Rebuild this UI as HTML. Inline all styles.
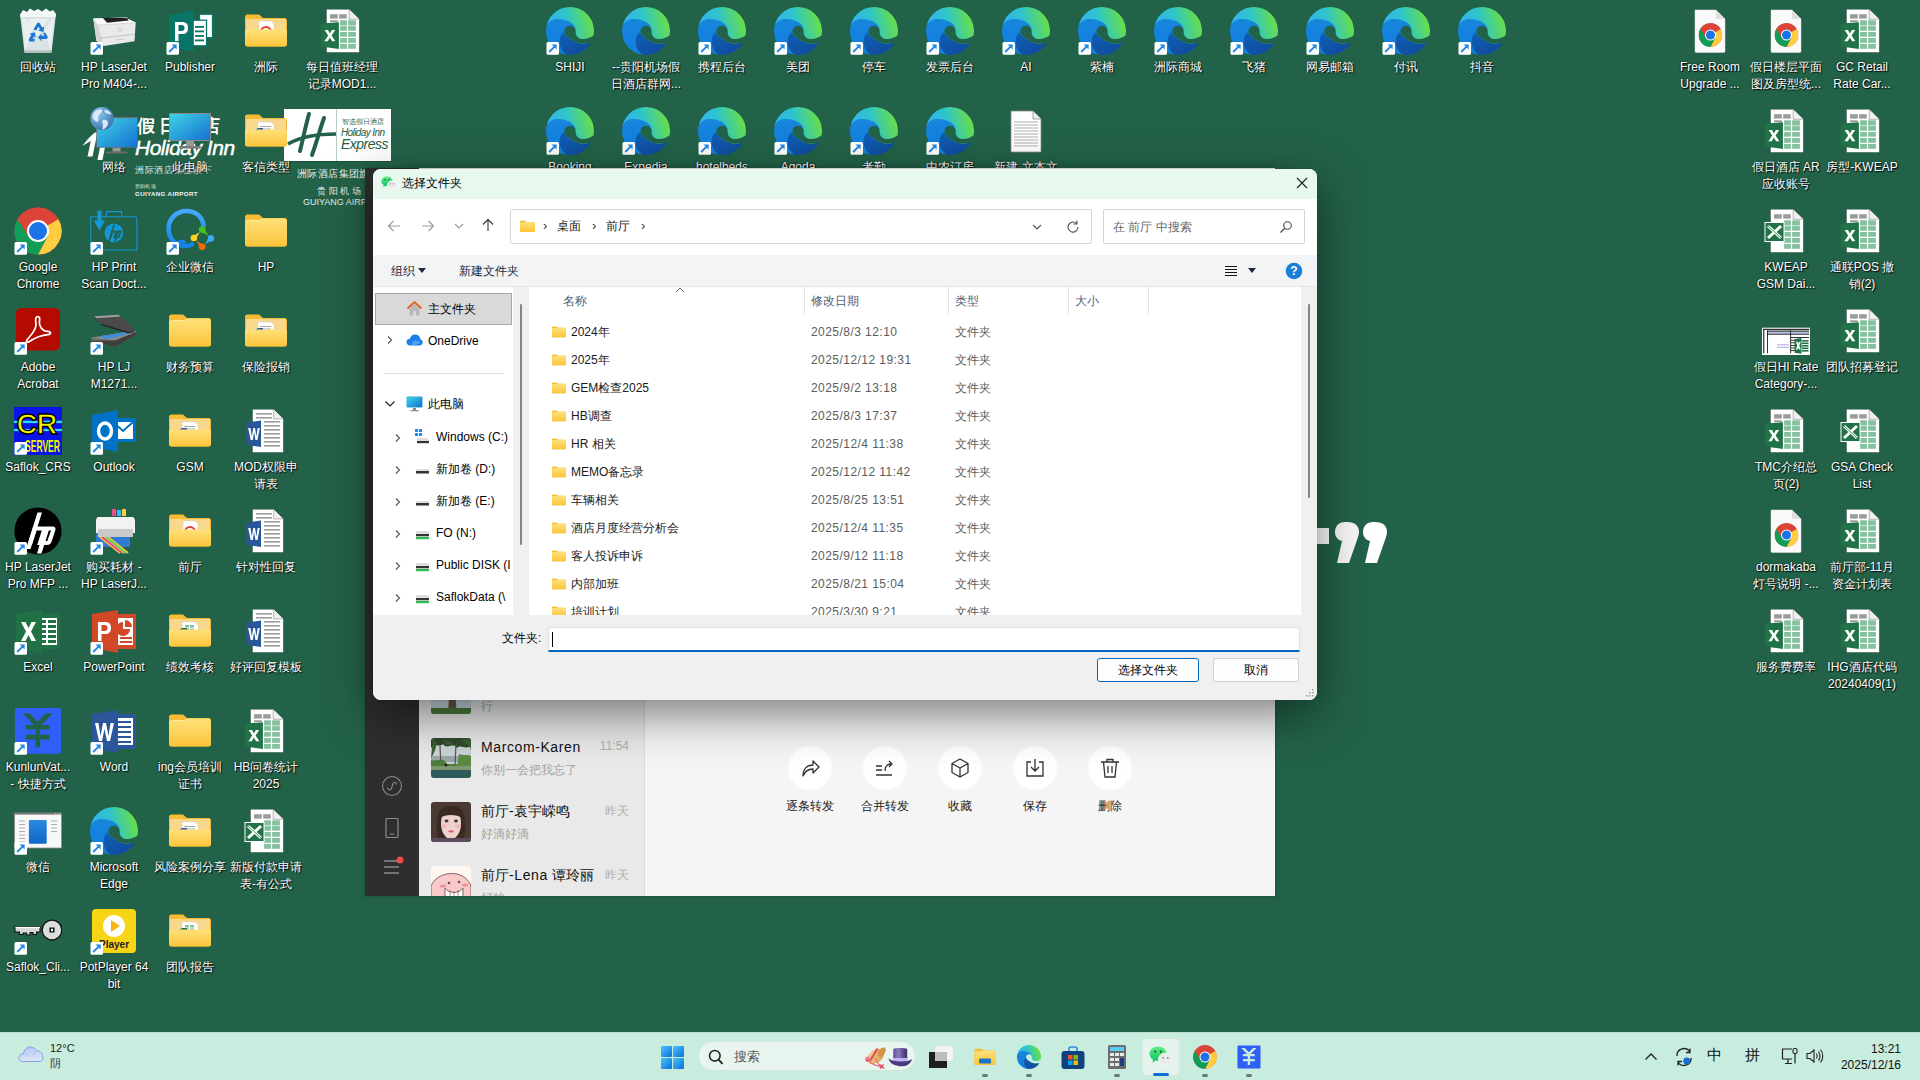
<!DOCTYPE html>
<html><head><meta charset="utf-8">
<style>
*{margin:0;padding:0;box-sizing:border-box}
html,body{width:1920px;height:1080px;overflow:hidden}
body{background:#226248;font-family:"Liberation Sans",sans-serif;position:relative;font-size:12px;color:#000}
.ic{position:absolute;width:76px;height:100px}
.si{position:absolute;left:14px;top:7px;width:48px;height:48px;overflow:visible}
.lb{position:absolute;left:1px;top:59px;width:74px;text-align:center;color:#fff;font-size:12px;line-height:17px;text-shadow:1px 1px 1px rgba(0,0,0,.9),0 0 2px rgba(0,0,0,.7)}
.abs{position:absolute}
/* logos */
.hlogo{position:absolute;color:#fff;font-style:italic;font-weight:bold}
/* wechat */
#wx{position:absolute;left:365px;top:168px;width:910px;height:728px;background:#f5f5f5;overflow:hidden;box-shadow:0 0 4px rgba(0,0,0,.25)}
#wxside{position:absolute;left:0;top:0;width:54px;height:728px;background:#2e2e2e}
#wxlist{position:absolute;left:54px;top:0;width:226px;height:728px;background:#e9e9e9;border-right:1px solid #d9d9d9}
.chat{position:absolute;left:0;width:226px;height:64px}
.av{position:absolute;left:12px;top:10px;width:40px;height:40px;overflow:hidden}
.cn{position:absolute;left:62px;top:11px;font-size:14px;color:#111;white-space:nowrap;letter-spacing:.6px}
.ct{position:absolute;right:16px;top:11px;font-size:12px;color:#b0b0b0}
.cm{position:absolute;left:62px;top:34px;font-size:12px;color:#a3a3a3;white-space:nowrap}
.act{position:absolute;top:578px;width:44px;height:44px;border-radius:50%;background:#fff}
.actl{position:absolute;top:630px;width:80px;text-align:center;font-size:12px;color:#222}
#wxshade{position:absolute;left:54px;top:531px;width:856px;height:80px;background:linear-gradient(rgba(0,0,0,.3),rgba(0,0,0,.13) 45%,rgba(0,0,0,.03) 85%,rgba(0,0,0,0))}
/* dialog */
#dlg{position:absolute;left:373px;top:169px;width:944px;height:531px;background:#fff;border-radius:8px;overflow:hidden;box-shadow:0 14px 48px rgba(0,0,0,.5),0 0 1px rgba(0,0,0,.4)}
#ttl{position:absolute;left:0;top:0;width:944px;height:30px;background:#e7f8ef}
#nav{position:absolute;left:0;top:30px;width:944px;height:56px;background:#fff}
#cmd{position:absolute;left:0;top:86px;width:944px;height:32px;background:#f3f4f6;border-bottom:1px solid #e5e5e5}
.box{position:absolute;background:#fff;border:1px solid #d6d6d6;border-radius:2px}
.t{position:absolute;white-space:nowrap;line-height:16px}
#navpane{position:absolute;left:0;top:118px;width:140px;height:328px;background:#fff;overflow:hidden}
#navtrack{position:absolute;left:140px;top:118px;width:16px;height:328px;background:#f0f0f0}
#list{position:absolute;left:156px;top:118px;width:772px;height:328px;background:#fff;overflow:hidden}
#rtrack{position:absolute;left:928px;top:118px;width:16px;height:328px;background:#f0f0f0}
#foot{position:absolute;left:0;top:446px;width:944px;height:85px;background:#f0f0f0}
.row{position:absolute;left:0;width:772px;height:28px}
.fi{position:absolute;left:22px;top:6px;width:16px;height:16px}
.rn{position:absolute;left:42px;top:6px;color:#1a1a1a;font-size:12px;line-height:16px;white-space:nowrap}
.rd{position:absolute;left:282px;top:6px;color:#5c5c5c;font-size:12px;line-height:16px;white-space:nowrap;letter-spacing:.45px}
.rt{position:absolute;left:426px;top:6px;color:#5c5c5c;font-size:12px;line-height:16px;white-space:nowrap}
.sep{position:absolute;top:0;width:1px;height:27px;background:#e5e5e5}
.btn{position:absolute;top:489px;height:24px;background:#fdfdfd;border:1px solid #d0d0d0;border-radius:3px;text-align:center;line-height:22px;font-size:12px;color:#000}
/* taskbar */
#tb{position:absolute;left:0;top:1032px;width:1920px;height:48px;background:#c8ecdd;border-top:1px solid #bcdccd}
.tbi{position:absolute;top:12px;width:24px;height:24px}
.dot{position:absolute;top:41px;width:6px;height:3px;border-radius:2px;background:#6e7a74}
i{font-style:normal;display:inline-block;width:1em;text-align:center;margin-right:var(--ls,0px)}
</style></head><body>

<svg width="0" height="0" style="position:absolute">
<defs>
<linearGradient id="gEdge" x1="0.05" y1="0.6" x2="0.95" y2="0.35">
 <stop offset="0" stop-color="#33b2f2"/><stop offset="0.5" stop-color="#2ec4cc"/><stop offset="1" stop-color="#66de4c"/>
</linearGradient>
<linearGradient id="gEdgeTail" x1="0" y1="0" x2="1" y2="1">
 <stop offset="0" stop-color="#1060bb"/><stop offset="1" stop-color="#0f4592"/>
</linearGradient>
<linearGradient id="gEdgeMid" x1="0" y1="0" x2="0" y2="1">
 <stop offset="0" stop-color="#1886dc"/><stop offset="1" stop-color="#0f7ee0"/>
</linearGradient>
<linearGradient id="gFold" x1="0" y1="0" x2="0" y2="1">
 <stop offset="0" stop-color="#ffe07a"/><stop offset="1" stop-color="#fbc53b"/>
</linearGradient>
<linearGradient id="gFoldBack" x1="0" y1="0" x2="0" y2="1">
 <stop offset="0" stop-color="#f8bd33"/><stop offset="1" stop-color="#eaa91f"/>
</linearGradient>
<linearGradient id="gMon" x1="0" y1="0" x2="1" y2="1">
 <stop offset="0" stop-color="#3fd3e6"/><stop offset="1" stop-color="#1570d0"/>
</linearGradient>
<linearGradient id="gWin" x1="0" y1="0" x2="1" y2="1">
 <stop offset="0" stop-color="#4cc2ff"/><stop offset="1" stop-color="#0a6fd8"/>
</linearGradient>

<symbol id="sc" viewBox="0 0 48 48">
 <rect x="0.5" y="35" width="12.5" height="12.7" rx="1.5" fill="#fff"/>
 <path d="M3.2 45 L9.8 38.4" stroke="#1e88e5" stroke-width="1.8" fill="none"/>
 <path d="M5.6 37.6 H10.6 V42.6 Z" fill="#1e88e5"/>
</symbol>

<symbol id="edge" viewBox="0 0 48 48">
 <mask id="mEdge"><circle cx="24" cy="24" r="24" fill="#fff"/>
  <path d="M18.4 24.5 A5.6 5.6 0 0 1 29.6 24 C29.6 27 30.2 29.5 33 31.2 C38 33.2 44 31.5 49 27.5 L49 40 L44.3 35.8 C38 37.3 31 37 26 33 C22 30 18.4 28 18.4 24.5 Z" fill="#000"/>
 </mask>
 <g mask="url(#mEdge)">
  <rect width="48" height="48" fill="url(#gEdge)"/>
  <path d="M-1 20 C3 14 7 12 11.5 12 C17.5 12 23 13.5 26.8 17 C28.5 18.8 29.5 21 29.6 24 L18.4 24.5 C15 27 13.2 30 13.2 34 C13.2 40 16 45 22 49 L-1 49 Z" fill="url(#gEdgeMid)"/>
  <path d="M18.4 24.5 C15 27 13.2 30 13.2 34 C13.2 40 16 45 22 49 L49 49 L49 31 L44.3 35.8 C38 37.3 31 37 26 33 C22 30 18.4 28 18.4 24.5 Z" fill="url(#gEdgeTail)"/>
 </g>
</symbol>

<symbol id="xls" viewBox="0 0 48 48">
 <path d="M8.3 2 H31.5 L41.6 12.2 V45.6 H8.3 Z" fill="#2a3a33" opacity="0.55"/>
 <path d="M8.7 2.4 H31.2 L41.2 12.3 V45.2 H8.7 Z" fill="#fff"/>
 <path d="M31.2 2.4 V12.3 H41.2" fill="#f0f0f0" stroke="#8a8a8a" stroke-width="0.6"/>
 <rect x="12" y="7.2" width="7.8" height="4.4" fill="#9b9b9b"/><rect x="21.2" y="7.2" width="7.5" height="4.4" fill="#9b9b9b"/>
 <rect x="12" y="13.3" width="7.8" height="1.8" fill="#9b9b9b"/>
 <g fill="#84c19e">
 <rect x="22.1" y="13.3" width="6.8" height="5.2"/><rect x="30.1" y="13.3" width="7.8" height="5.2"/>
 <rect x="22.1" y="19.1" width="6.8" height="4.6"/><rect x="30.1" y="19.1" width="7.8" height="4.6"/>
 <rect x="22.1" y="25" width="6.8" height="4.7"/><rect x="30.1" y="25" width="7.8" height="4.7"/>
 <rect x="22.1" y="31" width="6.8" height="4.8"/><rect x="30.1" y="31" width="7.8" height="4.8"/>
 <rect x="22.1" y="36.9" width="6.8" height="4.9"/><rect x="30.1" y="36.9" width="7.8" height="4.9"/>
 </g>
 <path d="M2.9 16.6 L20.9 15.2 V41.9 L2.9 39.6 Z" fill="#1f7346"/>
 <path d="M6.6 23 H10 L11.9 26.6 L13.8 23 H17.2 L13.6 28.6 L17.4 34.2 H14 L11.9 30.5 L9.8 34.2 H6.4 L10.2 28.6 Z" fill="#fff"/>
</symbol>

<symbol id="xls2" viewBox="0 0 48 48">
 <path d="M8.3 2 H31.5 L41.6 12.2 V45.6 H8.3 Z" fill="#2a3a33" opacity="0.55"/>
 <path d="M8.7 2.4 H31.2 L41.2 12.3 V45.2 H8.7 Z" fill="#fff"/>
 <path d="M31.2 2.4 V12.3 H41.2" fill="#f0f0f0" stroke="#8a8a8a" stroke-width="0.6"/>
 <rect x="12" y="7.2" width="7.8" height="4.4" fill="#9b9b9b"/><rect x="21.2" y="7.2" width="7.5" height="4.4" fill="#9b9b9b"/>
 <g fill="#84c19e">
 <rect x="22.1" y="13.3" width="6.8" height="5.2"/><rect x="30.1" y="13.3" width="7.8" height="5.2"/>
 <rect x="22.1" y="19.1" width="6.8" height="4.6"/><rect x="30.1" y="19.1" width="7.8" height="4.6"/>
 <rect x="22.1" y="25" width="6.8" height="4.7"/><rect x="30.1" y="25" width="7.8" height="4.7"/>
 <rect x="22.1" y="31" width="6.8" height="4.8"/><rect x="30.1" y="31" width="7.8" height="4.8"/>
 <rect x="22.1" y="36.9" width="6.8" height="4.9"/><rect x="30.1" y="36.9" width="7.8" height="4.9"/>
 </g>
 <rect x="2.5" y="15" width="20" height="20" fill="#fff"/>
 <rect x="3.5" y="16" width="18" height="18" fill="#1f7346"/>
 <path d="M6 19 L19 31 M19 19 L6 31" stroke="#fff" stroke-width="3"/>
 <path d="M6 19 L19 31" stroke="#1f7346" stroke-width="0.8"/>
</symbol>

<symbol id="doc" viewBox="0 0 48 48">
 <path d="M10.3 2 H32 L41.6 11.8 V45.6 H10.3 Z" fill="#2a3a33" opacity="0.5"/>
 <path d="M10.7 2.4 H31.7 L41.2 11.9 V45.2 H10.7 Z" fill="#fff"/>
 <path d="M31.7 2.4 V11.9 H41.2" fill="#f0f0f0" stroke="#8a8a8a" stroke-width="0.6"/>
 <g fill="#9d9d9d"><rect x="14" y="6" width="16" height="1.6"/><rect x="14" y="10" width="16" height="1.6"/>
 <rect x="22" y="14" width="16" height="1.6"/><rect x="22" y="18" width="16" height="1.6"/><rect x="22" y="22" width="16" height="1.6"/>
 <rect x="22" y="26" width="16" height="1.6"/><rect x="22" y="30" width="16" height="1.6"/><rect x="22" y="34" width="16" height="1.6"/><rect x="22" y="38" width="16" height="1.6"/></g>
 <path d="M4.5 15.5 L19 13.5 V40 L4.5 38 Z" fill="#2b579a"/>
 <path d="M6.2 21 H8.5 L9.8 29.5 L11.3 21 H13 L14.4 29.5 L15.7 21 H17.8 L15.4 33 H13.4 L12.1 25 L10.8 33 H8.7 Z" fill="#fff"/>
</symbol>

<symbol id="folder" viewBox="0 0 48 48">
 <path d="M3 10 C3 8.5 4 7.5 5.5 7.5 H17 L21 11 H42.5 C44 11 45 12 45 13.5 V37 C45 38.5 44 39.5 42.5 39.5 H5.5 C4 39.5 3 38.5 3 37 Z" fill="url(#gFoldBack)"/>
 <path d="M3 15.5 C3 14 4 13 5.5 13 H18 L21.5 11.5 H42.5 C44 11.5 45 12.5 45 14 V37 C45 38.5 44 39.5 42.5 39.5 H5.5 C4 39.5 3 38.5 3 37 Z" fill="url(#gFold)"/>
 <path d="M5 13.4 H18 L21.5 11.9" stroke="#fff6c8" stroke-width="0.6" fill="none"/>
</symbol>

<symbol id="folderdoc" viewBox="0 0 48 48">
 <path d="M3 10 C3 8.5 4 7.5 5.5 7.5 H17 L21 11 H42.5 C44 11 45 12 45 13.5 V37 C45 38.5 44 39.5 42.5 39.5 H5.5 C4 39.5 3 38.5 3 37 Z" fill="url(#gFoldBack)"/>
 <path d="M4 12 H44 V24 H4 Z" fill="#f7d88c"/>
 <path d="M16 15 H29 L32 18 V28 H16 Z" fill="#fff" stroke="#cfcfcf" stroke-width="0.5"/>
 <g fill="#a9a9a9"><rect x="18" y="19" width="11" height="1"/><rect x="18" y="21.5" width="11" height="1"/><rect x="18" y="24" width="11" height="1"/></g>
 <path d="M12 24 L16 21 H21 V24 Z" fill="#2c5aa0"/>
 <path d="M3 24 C3 23 3.8 22.5 5 22.5 H43 C44.2 22.5 45 23 45 24 V37 C45 38.5 44 39.5 42.5 39.5 H5.5 C4 39.5 3 38.5 3 37 Z" fill="url(#gFold)"/>
</symbol>

<symbol id="folderxls" viewBox="0 0 48 48">
 <path d="M3 10 C3 8.5 4 7.5 5.5 7.5 H17 L21 11 H42.5 C44 11 45 12 45 13.5 V37 C45 38.5 44 39.5 42.5 39.5 H5.5 C4 39.5 3 38.5 3 37 Z" fill="url(#gFoldBack)"/>
 <path d="M4 12 H44 V24 H4 Z" fill="#f7d88c"/>
 <path d="M16 15 H29 L32 18 V28 H16 Z" fill="#fff" stroke="#cfcfcf" stroke-width="0.5"/>
 <g fill="#84c19e"><rect x="19" y="18" width="4" height="2.5"/><rect x="24" y="18" width="4" height="2.5"/><rect x="19" y="21.5" width="4" height="2.5"/><rect x="24" y="21.5" width="4" height="2.5"/></g>
 <path d="M12 24 L16 21 H21 V24 Z" fill="#1f7346"/>
 <path d="M3 24 C3 23 3.8 22.5 5 22.5 H43 C44.2 22.5 45 23 45 24 V37 C45 38.5 44 39.5 42.5 39.5 H5.5 C4 39.5 3 38.5 3 37 Z" fill="url(#gFold)"/>
</symbol>

<symbol id="folderpdf" viewBox="0 0 48 48">
 <path d="M3 10 C3 8.5 4 7.5 5.5 7.5 H17 L21 11 H42.5 C44 11 45 12 45 13.5 V37 C45 38.5 44 39.5 42.5 39.5 H5.5 C4 39.5 3 38.5 3 37 Z" fill="url(#gFoldBack)"/>
 <path d="M4 12 H44 V24 H4 Z" fill="#f7d88c"/>
 <path d="M17 14 H29 L32 17 V28 H17 Z" fill="#fff" stroke="#cfcfcf" stroke-width="0.5"/>
 <path d="M19 25 A5 5 0 0 1 29 25" stroke="#e03c31" stroke-width="2.2" fill="none"/>
 <path d="M3 24 C3 23 3.8 22.5 5 22.5 H43 C44.2 22.5 45 23 45 24 V37 C45 38.5 44 39.5 42.5 39.5 H5.5 C4 39.5 3 38.5 3 37 Z" fill="url(#gFold)"/>
</symbol>

<symbol id="chromelogo" viewBox="0 0 48 48">
 <circle cx="24" cy="24" r="23.6" fill="#db4437"/>
 <path d="M24 24 L3.56 35.8 A23.6 23.6 0 0 1 3.56 12.2 L14.5 29.5 Z" fill="#0f9d58"/>
 <path d="M24 24 L44.44 12.2 A23.6 23.6 0 0 1 24 47.6 L33.5 29.5 Z" fill="#ffcd40"/>
 <path d="M3.56 35.8 A23.6 23.6 0 0 0 24 47.6 L33.5 29.5 L24 24 Z" fill="#0f9d58"/>
 <path d="M3.56 12.2 A23.6 23.6 0 0 1 44.44 12.2 H24 A11 11 0 0 0 14.5 18.5 Z" fill="#db4437"/>
 <circle cx="24" cy="24" r="11" fill="#fff"/>
 <circle cx="24" cy="24" r="9" fill="#1a73e8"/>
</symbol>

<symbol id="chromefile" viewBox="0 0 48 48">
 <path d="M9 3 H30 L39 12 V44 C39 45 38.5 45.5 37.5 45.5 H10.5 C9.5 45.5 9 45 9 44 Z" fill="#fafafa" stroke="#e3e3e3" stroke-width="0.5"/>
 <path d="M30 3 V11 C30 11.6 30.4 12 31 12 H39" fill="#dedede"/>
 <use href="#chromelogo" x="12.5" y="16" width="24" height="24"/>
</symbol>

<symbol id="txt" viewBox="0 0 48 48">
 <path d="M9 4 H31 L39 12 V45 H9 Z" fill="#fff" stroke="#8a8a8a" stroke-width="0.8"/>
 <path d="M31 4 V12 H39" fill="#eee" stroke="#8a8a8a" stroke-width="0.8"/>
 <g stroke="#9a9a9a" stroke-width="0.8"><path d="M12 15 H36 M12 18 H36 M12 21 H36 M12 24 H36 M12 27 H36 M12 30 H36 M12 33 H36 M12 36 H36 M12 39 H36"/></g>
</symbol>

<symbol id="recycle" viewBox="0 0 48 48">
 <path d="M6 7 H42 L37.5 45.5 H10.5 Z" fill="#d9e2e4"/>
 <path d="M8 9 L20 20 L11 44 Z M40 9 L30 24 L37 44 Z M14 12 L34 12 L24 30 Z" fill="#eef3f3" opacity=".8"/>
 <path d="M6 7 H42 L41.6 10 H6.4 Z" fill="#f4f7f7"/>
 <path d="M6.5 7 L9 3 L13 5 L16 1.5 L20 4 L24 2 L28 4.5 L32 1.5 L36 4.5 L39 3 L42 7 Z" fill="#f7f9f9"/>
 <path d="M10.2 43.5 H37.8 L37.5 46 H10.5 Z" fill="#b3bcbe"/>
 <g fill="#1976d2">
  <path d="M19.5 22.5 L23 16.5 C23.8 15.2 25 15.2 25.8 16.5 L28.2 20.6 L30.2 19.4 L29.4 25 L24.2 23.5 L26 22.3 L24.4 19.6 L22.3 23.5 Z"/>
  <path d="M31.5 26 L33.5 29.5 C34.2 30.8 33.5 32 32 32 H27.5 V34.3 L24 30.5 L27.5 26.6 V28.8 H30.5 L28.8 25.6 Z"/>
  <path d="M20.5 34.5 H16.5 C15 34.5 14.3 33.3 15 32 L17.4 27.8 L15.4 26.7 L20.7 25.2 L21.6 30.6 L19.8 29.5 L18.3 31.6 H20.5 Z"/>
 </g>
</symbol>

<symbol id="printer" viewBox="0 0 48 48">
 <path d="M3.3 11.4 L35 10.4 L45.7 15.4 L44.5 34.2 L13.9 39 L6.4 33.7 Z" fill="#e9e9e9"/>
 <path d="M3.3 11.4 L35 10.4 L45.7 15.4 L7.6 17.8 Z" fill="#f8f8f8"/>
 <path d="M3.3 11.4 L7.6 17.8 L13.9 39 L6.4 33.7 Z" fill="#d4d4d4"/>
 <path d="M13 11 L37 10.8 L38.5 13.6 L17 15.8 Z" fill="#1e1e1e"/>
 <path d="M34 10.2 L37.5 10.2 L38 11 L34.5 11.2 Z" fill="#9ab4e8"/>
 <path d="M10 30.5 L45 26.8 L45 27.8 L10.3 31.6 Z" fill="#c4c4c4"/>
 <path d="M7.6 17.8 L45.7 15.4 L45.6 16.4 L8 18.8 Z" fill="#dadada"/>
 <circle cx="30" cy="22.5" r="1.7" fill="none" stroke="#c4c4c4" stroke-width=".8"/>
 <path d="M26 33 L34 32" stroke="#c4c4c4" stroke-width=".8"/>
</symbol>

<symbol id="publisher" viewBox="0 0 48 48">
 <rect x="33.5" y="7.2" width="13" height="23.5" fill="#fff" stroke="#077568" stroke-width="1.3"/>
 <rect x="26.5" y="13.2" width="14" height="25.6" fill="#fff" stroke="#077568" stroke-width="1.3"/>
 <g fill="#077568"><rect x="29" y="19" width="9" height="1.8"/><rect x="29" y="23.5" width="9" height="1.8"/><rect x="29" y="28" width="9" height="1.8"/><rect x="29" y="32.5" width="9" height="1.8"/></g>
 <path d="M2.8 8.5 L27.8 3 V44.5 L2.8 40 Z" fill="#077568"/>
 <path d="M9 15 H16 C20 15 22 17 22 21 C22 25 20 27 16 27 H12.5 V34 H9 Z M12.5 18 V24 H15.5 C17.5 24 18.5 23 18.5 21 C18.5 19 17.5 18 15.5 18 Z" fill="#fff"/>
</symbol>

<symbol id="monitor" viewBox="0 0 48 48">
 <rect x="3" y="6" width="42" height="28" rx="1" fill="#8b8b8b"/>
 <rect x="4" y="7" width="40" height="26" fill="url(#gMon)"/>
 <rect x="20" y="34" width="8" height="5" fill="#9a9a9a"/>
 <rect x="13" y="39" width="22" height="2.5" rx="1" fill="#7a7a7a"/>
</symbol>

<symbol id="network" viewBox="0 0 48 48">
 <rect x="6.3" y="10" width="41.3" height="30.7" rx=".8" fill="#6e6e6e"/>
 <rect x="6.9" y="11.2" width="40.1" height="28.9" fill="url(#gMon)"/>
 <rect x="22.5" y="40.7" width="8" height="4" fill="#9a9a9a"/>
 <rect x="15.5" y="44.5" width="22" height="2" rx="1" fill="#6a6a6a"/>
 <radialGradient id="gGlobe" cx="0.35" cy="0.3" r="0.8"><stop offset="0" stop-color="#8ec4ec"/><stop offset="1" stop-color="#2f6fa8"/></radialGradient>
 <circle cx="12" cy="11.5" r="11.7" fill="url(#gGlobe)"/>
 <path d="M3 7 C5 3.5 9 1.5 12 2.5 C13 5 10 6.5 8.5 8.5 C7.5 10.5 9.5 13 7.5 15 C5.5 15 3.5 12 2.2 11 Z M14 3 C17 2.5 20 4.5 21.5 7 C19.5 8 17 6.5 15.5 6 Z M13 13 C16 12 18.5 14 18 17 C17 20 14.5 22.5 12.5 22.5 C12.5 19.5 13.5 17 12 15 Z" fill="#e6f0f6" opacity=".9"/>
</symbol>

<symbol id="hpprint" viewBox="0 0 48 48">
 <path d="M0.8 9.7 H44.5 C46 9.7 46.9 10.6 46.9 12 V43 H0.8 Z" fill="none" stroke="#1596d6" stroke-width="1.1"/>
 <path d="M16.4 9.7 V4.6 H31.7 V9.7" fill="none" stroke="#1596d6" stroke-width="1.1"/>
 <rect x="7.4" y="3.6" width="4.2" height="10.5" fill="#1596d6"/>
 <path d="M3.9 13.4 H15 L9.45 23.5 Z" fill="#1596d6"/>
 <circle cx="23.8" cy="25.9" r="9.3" fill="#1596d6"/>
 <g fill="#226248">
  <path d="M18.3 34 L23.4 17.6 H25 L19.9 34 Z"/>
  <path d="M21.5 23.6 H25.6 C26.6 23.6 27 24.2 26.7 25.1 L24.8 31.2 H23.2 L24.9 25.6 H23 L21.2 31.2 H19.6 Z"/>
  <path d="M27.2 23.6 H30.3 C31.3 23.6 31.7 24.2 31.4 25.1 L30 29.6 C29.7 30.6 29.1 31.2 28 31.2 H26.3 L26.8 29.6 H28.4 L29.6 25.6 H28.7 L25.8 34.5 H24.3 Z"/>
 </g>
</symbol>

<symbol id="qywx" viewBox="0 0 48 48">
 <linearGradient id="gQy" x1="0" y1="0" x2="0" y2="1"><stop offset="0" stop-color="#45a8ff"/><stop offset="1" stop-color="#1683ec"/></linearGradient>
 <path d="M26 37.5 C24 38.5 21.5 39 19 39 C8.8 39 2.6 31 2.6 21.6 C2.6 12 10.5 4 20.5 4 C30 4 37 10.5 37.5 19" fill="none" stroke="url(#gQy)" stroke-width="4.6" stroke-linecap="round"/>
 <path d="M12 36 C14 34 17 34 19.5 36" fill="none" stroke="#1683ec" stroke-width="3.5"/>
 <circle cx="36.2" cy="22.6" r="3.3" fill="#48c21a"/><path d="M34.57 24.23 L42.54 28.94 L37.83 20.97 Z" fill="#48c21a"/><circle cx="45" cy="31.4" r="3.3" fill="#3aaaf8"/><path d="M43.41 29.74 L38.66 37.45 L46.59 33.06 Z" fill="#3aaaf8"/><circle cx="36.2" cy="39.8" r="3.3" fill="#f46a0c"/><path d="M37.87 38.22 L30.22 33.46 L34.53 41.38 Z" fill="#f46a0c"/><circle cx="27.9" cy="31" r="3.3" fill="#f8d320"/><path d="M29.54 32.62 L33.88 24.95 L26.26 29.38 Z" fill="#f8d320"/>
</symbol>

<symbol id="acrobat" viewBox="0 0 48 48">
 <rect x="2" y="1" width="44" height="42.5" rx="5.5" fill="#b30b00"/>
 <path d="M23.8 9.6 C21.8 9.6 21.2 12 21.8 15 C22.8 19.5 19.8 25.5 14.5 31 C11 34.6 12.6 36.4 15.8 34.2 C20.5 31 27.5 28.2 34 27.6 C37.6 27.3 37.2 24.4 33.6 24.3 C28 24.1 24.4 18.2 25.5 14 C26.1 11.6 25.6 9.6 23.8 9.6 Z" fill="none" stroke="#fff" stroke-width="1.7" stroke-linejoin="round"/>
</symbol>

<symbol id="scanner" viewBox="0 0 48 48">
 <path d="M1.1 30.8 L44 23.4 L46.3 24.9 L46 28 L25.6 39.7 L1.9 33.7 Z" fill="#6b6b6b"/>
 <path d="M1.1 30.8 L44 23.4 L46.3 24.9 L25 33.5 Z" fill="#8a8a8a"/>
 <path d="M1.9 33.7 L25 33.5 L46.3 24.9 L46 28 L25.6 39.7 Z" fill="#3e3e3e"/>
 <path d="M9.3 29.3 L37.4 24.9 L40.4 26.3 L16.7 32.3 Z" fill="#3b8fd6"/>
 <path d="M4.1 9.3 L28.5 7.8 L44 21.5 L44 24 L38 24.8 L11 16.8 L4.3 11.8 Z" fill="#4a4a4a"/>
 <path d="M4.1 9.3 L28.5 7.8 L30.5 9.6 L7 11.3 Z" fill="#a0a0a0"/>
 <path d="M11 16.8 L38 24.8 L44 24 L44 25.2 L38 26.2 L10.5 18 Z" fill="#222"/>
</symbol>

<symbol id="outlook" viewBox="0 0 48 48">
 <path d="M20 11 H46 V35 H20 Z" fill="#0072c6"/>
 <path d="M23 15 H43 V32 H23 Z" fill="#fff"/>
 <path d="M23 15 L33 24 L43 15" stroke="#0072c6" stroke-width="2" fill="none"/>
 <path d="M2 8 L28 3 V45 L2 40 Z" fill="#0072c6"/>
 <ellipse cx="15" cy="24" rx="6.5" ry="8" fill="none" stroke="#fff" stroke-width="3.4"/>
</symbol>

<symbol id="crs" viewBox="0 0 48 48">
 <rect x="0" y="0" width="48" height="48" rx="1" fill="#0a14e6"/>
 <rect x="0" y="13.7" width="48" height="2.4" fill="#28e0f0"/><rect x="0" y="21.9" width="48" height="2.2" fill="#28e0f0"/>
 <text x="2.5" y="27" font-family="Liberation Sans" font-weight="bold" font-size="29" fill="#f4f400" stroke="#000" stroke-width="1.4" textLength="41" lengthAdjust="spacing">CR</text>
 <text x="11" y="45" font-family="Liberation Sans" font-weight="bold" font-size="17" fill="#f4f400" textLength="35" lengthAdjust="spacingAndGlyphs">SERVER</text>
</symbol>

<symbol id="hplogo" viewBox="0 0 48 48">
 <circle cx="24" cy="24" r="23.6" fill="#000"/>
 <g fill="#fff">
 <path d="M12 42 L23.5 5.5 H28 L16.5 42 Z"/>
 <path d="M19.2 19.5 H29.5 C32 19.5 33 21 32.3 23.2 L27.6 38 H23.2 L27.8 23.6 H22.5 L17.9 38 H13.6 Z"/>
 <path d="M31 19.5 H38.5 C41 19.5 42 21 41.3 23.2 L37.8 34 C37 36.5 35.5 38 33 38 H28.2 L29.4 34 H33.3 L37 23.6 H34.8 L27.5 46.5 H23 Z"/>
 </g>
</symbol>

<symbol id="buyprinter" viewBox="0 0 48 48">
 <path d="M6 18 H40 V40 H6 Z" fill="#2f7bd4"/>
 <path d="M10 30 L30 46 M14 30 L34 46 M18 30 L38 46" stroke="#ffcc33" stroke-width="2"/>
 <path d="M12 30 L32 46" stroke="#e84a8a" stroke-width="2"/><path d="M16 30 L36 46" stroke="#5fd06a" stroke-width="2"/>
 <path d="M8 10 H42 C44 10 45 12 45 14 V26 H6 V14 C6 12 7 10 8 10 Z" fill="#f2f2f2"/>
 <path d="M8 22 H43 V30 H8 Z" fill="#c9c9c9"/>
 <rect x="22" y="2" width="4" height="7" fill="#e84a8a"/><rect x="27" y="3" width="4" height="6" fill="#3ab8ff"/><rect x="32" y="2" width="4" height="7" fill="#ffcc33"/>
</symbol>

<symbol id="pptapp" viewBox="0 0 48 48">
 <path d="M20 7 H46 V42 H20 Z" fill="#d24726"/>
 <path d="M23 11 H43 V38 H23 Z" fill="#fff"/>
 <path d="M33 15 A7 7 0 1 0 40 22 H33 Z" fill="#d24726"/><path d="M35 13 A7 7 0 0 1 42 20 H35 Z" fill="#d24726"/>
 <rect x="30" y="30" width="12" height="2" fill="#d24726"/><rect x="30" y="34" width="12" height="2" fill="#d24726"/>
 <path d="M2 7 L28 3 V46 L2 41 Z" fill="#d24726"/>
 <path d="M8 15 H15 C19 15 21 17 21 21 C21 25 19 27 15 27 H11.5 V34 H8 Z M11.5 18 V24 H14.5 C16.5 24 17.5 23 17.5 21 C17.5 19 16.5 18 14.5 18 Z" fill="#fff"/>
</symbol>

<symbol id="xlsapp" viewBox="0 0 48 48">
 <path d="M20 7 H46 V42 H20 Z" fill="#207245"/>
 <path d="M24 11 H43 V38 H24 Z" fill="#fff"/>
 <g fill="#207245"><rect x="25" y="13" width="7" height="3"/><rect x="34" y="13" width="8" height="3"/><rect x="25" y="18" width="7" height="3"/><rect x="34" y="18" width="8" height="3"/><rect x="25" y="23" width="7" height="3"/><rect x="34" y="23" width="8" height="3"/><rect x="25" y="28" width="7" height="3"/><rect x="34" y="28" width="8" height="3"/><rect x="25" y="33" width="7" height="3"/><rect x="34" y="33" width="8" height="3"/></g>
 <path d="M2 7 L28 3 V46 L2 41 Z" fill="#207245"/>
 <path d="M7 15 H11.5 L14.5 21 L17.5 15 H22 L17 24.5 L22 34 H17.5 L14.5 28 L11.5 34 H7 L12 24.5 Z" fill="#fff"/>
</symbol>

<symbol id="wordapp" viewBox="0 0 48 48">
 <path d="M20 7 H46 V42 H20 Z" fill="#2b579a"/>
 <path d="M24 11 H43 V38 H24 Z" fill="#fff"/>
 <g fill="#2b579a"><rect x="27" y="14" width="14" height="2"/><rect x="27" y="19" width="14" height="2"/><rect x="27" y="24" width="14" height="2"/><rect x="27" y="29" width="14" height="2"/><rect x="27" y="34" width="14" height="2"/></g>
 <path d="M2 7 L28 3 V46 L2 41 Z" fill="#2b579a"/>
 <path d="M5 16 H8.5 L10.5 29 L13 16 H16 L18.5 29 L20.5 16 H24 L20 34 H17 L14.5 22 L12 34 H9 Z" fill="#fff"/>
</symbol>

<symbol id="kunlun" viewBox="0 0 48 48">
 <mask id="mKl"><rect width="48" height="48" fill="#fff"/>
  <path d="M8.5 6.2 H15.5 L23.8 14.5 L32.1 6.2 H39.1 L27.5 18 H35.6 V22.6 H26.2 V27.8 H35.6 V32.4 H26.2 V40.2 H21.4 V32.4 H11.9 V27.8 H21.4 V22.6 H11.9 V18 H20.1 Z" fill="#000"/>
 </mask>
 <rect x="0.9" y="1.1" width="46.1" height="45.7" rx="2.5" fill="#2f5ef8" mask="url(#mKl)"/>
</symbol>

<symbol id="wxfile" viewBox="0 0 48 48">
 <rect x="0.5" y="6" width="47" height="35" fill="#f8f8f8" stroke="#8a8a8a" stroke-width=".8"/>
 <rect x="0.5" y="6" width="47" height="1.6" fill="#7a7a7a"/>
 <g fill="#ddd"><circle cx="41.5" cy="6.8" r=".5"/><circle cx="43.5" cy="6.8" r=".5"/><circle cx="45.5" cy="6.8" r=".5"/></g>
 <linearGradient id="gWxf" x1="0" y1="0" x2="0" y2="1"><stop offset="0" stop-color="#2a8ae0"/><stop offset="1" stop-color="#0f66c8"/></linearGradient>
 <rect x="14.9" y="13" width="17.8" height="23.7" rx="1.2" fill="url(#gWxf)"/>
 <g stroke="#9a9a9a" stroke-width=".8"><path d="M5 14 H11 M5 17.5 H11 M5 21 H11 M5 24.5 H11 M5 28 H11 M5 31.5 H11 M5 35 H11 M37 14 H43 M37 17.5 H43 M37 21 H43 M37 24.5 H43"/></g>
</symbol>

<symbol id="key" viewBox="0 0 48 48">
 <pattern id="pChk" width="2" height="2" patternUnits="userSpaceOnUse"><rect width="2" height="2" fill="#fff"/><rect width="1" height="1" fill="#bbb"/><rect x="1" y="1" width="1" height="1" fill="#bbb"/></pattern>
 <g transform="translate(0 10.5)"><path d="M1 9.5 H26 V14.5 H22.5 V17 H19 V15 H16 V17.5 H12.5 V15.5 H9 V17 H5.5 V14.5 H1 Z" fill="#d8d8d8" stroke="#111" stroke-width="1.1"/>
 <path d="M1.5 10 H26" stroke="#fff" stroke-width="1.2"/>
 <circle cx="38" cy="12.5" r="9.8" fill="url(#pChk)" stroke="#111" stroke-width="1.3"/>
 <rect x="35.5" y="10" width="5" height="5" fill="#111"/>
 <rect x="37" y="11.3" width="2" height="2.4" fill="#fff"/>
</g></symbol>

<symbol id="potplayer" viewBox="0 0 48 48">
 <rect x="2" y="2" width="44" height="44" rx="4" fill="#f8d417"/>
 <circle cx="24" cy="19" r="11" fill="#fff"/>
 <path d="M21 13 L30 19 L21 25 Z" fill="#f8b417"/>
 <text x="9" y="41" font-family="Liberation Sans" font-weight="bold" font-size="10" fill="#222">Player</text>
</symbol>

<symbol id="wechat" viewBox="0 0 24 20">
 <linearGradient id="gWx" x1="0" y1="0" x2="0" y2="1"><stop offset="0" stop-color="#66ee88"/><stop offset="1" stop-color="#07c160"/></linearGradient>
 <path d="M9 0.6 C13.8 0.6 17.6 3.8 17.6 7.8 C17.6 11.8 13.8 15 9 15 C8 15 7 14.8 6.2 14.6 L3.6 16.8 L4 13.6 C1.9 12.3 0.5 10.2 0.5 7.8 C0.5 3.8 4.3 0.6 9 0.6 Z" fill="url(#gWx)"/>
 <circle cx="6.2" cy="5.6" r="1.15" fill="#0b5d2b"/><circle cx="11.8" cy="5.6" r="1.15" fill="#0b5d2b"/>
 <path d="M16.5 7.2 C20.4 7.2 23.5 9.9 23.5 13.2 C23.5 15 22.6 16.6 21.2 17.7 L21.6 19.8 L19.2 18.7 C18.3 19 17.4 19.2 16.5 19.2 C12.6 19.2 9.5 16.5 9.5 13.2 C9.5 9.9 12.6 7.2 16.5 7.2 Z" fill="#ebebeb" stroke="#fafafa" stroke-width=".8"/>
 <circle cx="14.2" cy="11.8" r=".9" fill="#7a7a7a"/><circle cx="18.8" cy="11.8" r=".9" fill="#7a7a7a"/>
</symbol>

<symbol id="ratecat" viewBox="0 0 48 48">
 <rect x="0" y="20.7" width="48" height="27.3" fill="#fff"/>
 <g fill="#000">
  <rect x="1.3" y="21.8" width="46" height="1"/>
  <rect x="1.3" y="21.8" width="1" height="24.5"/>
  <rect x="5" y="23.6" width="42" height="1"/>
  <rect x="5" y="23.6" width="0.8" height="22.7"/>
  <rect x="5" y="26.6" width="42" height="1"/>
  <rect x="28.3" y="23.6" width="0.8" height="22.7"/>
  <rect x="29" y="30" width="18" height="0.8"/>
  <rect x="29" y="32.8" width="4" height="0.8"/><rect x="29" y="35.4" width="4" height="0.8"/><rect x="29" y="38" width="4" height="0.8"/><rect x="29" y="40.6" width="4" height="0.8"/><rect x="29" y="43.2" width="4" height="0.8"/>
 </g>
 <rect x="6" y="25" width="22" height="1.2" fill="#a9bfee"/><rect x="29.5" y="25" width="17.5" height="1.2" fill="#a9bfee"/>
 <rect x="15" y="37.5" width="12" height=".7" fill="#9a7ad0"/><rect x="15" y="39.8" width="12" height=".8" fill="#7a9ad0"/>
 <rect x="38" y="31.5" width="9.5" height="15" fill="#fff"/>
 <g fill="#1f7346"><rect x="40" y="33" width="6.5" height="1.6"/><rect x="40" y="35.5" width="6.5" height="1.6"/><rect x="40" y="38" width="6.5" height="1.6"/><rect x="40" y="40.5" width="6.5" height="1.6"/><rect x="40" y="43" width="6.5" height="1.6"/></g>
 <path d="M32.5 32 L39.5 31 V46.7 L32.5 45.8 Z" fill="#1f7346"/>
 <path d="M33.8 34.8 H35.6 L36.3 36.8 L37 34.8 H38.7 L37.3 38.6 L38.8 42.6 H37 L36.3 40.5 L35.5 42.6 H33.8 L35.3 38.6 Z" fill="#fff"/>
</symbol>
</defs>
</svg>


<!-- Holiday Inn logo (white, behind icons) -->
<svg class="abs" style="left:78px;top:125px" width="40" height="40" viewBox="0 0 40 40">
  <path d="M4.5 21 C8 16 12 11 17 7.5 L19.5 7.5 L14.5 31.5 H9.5 L12.8 16 C10 17.5 7 19.5 4.5 21 Z" fill="#fff"/>
  <path d="M23 17 L19.5 35 H24.5 L28 17 Z" fill="#fff"/>
</svg>
<div class="hlogo" style="left:137px;top:116px;font-size:18px;line-height:21px;--ls:3.6px;font-style:italic;font-weight:bold;white-space:nowrap"><i>假</i><i>日</i><i>酒</i><i>店</i></div>
<div class="hlogo" style="left:135px;top:136px;font-size:21px;line-height:24px;letter-spacing:-.5px;font-weight:normal;-webkit-text-stroke:.5px #fff;white-space:nowrap">Holiday Inn</div>
<div class="abs" style="left:135px;top:166px;font-size:8.5px;line-height:9px;color:#dfe9e4;--ls:1.2px;white-space:nowrap"><i>洲</i><i>际</i><i>酒</i><i>店</i><i>集</i><i>团</i><i>旗</i><i>下</i></div>
<div class="abs" style="left:135px;top:183px;font-size:5px;line-height:6px;color:#dfe9e4;--ls:.2px;white-space:nowrap"><i>贵</i><i>阳</i><i>机</i><i>场</i></div>
<div class="abs" style="left:135px;top:190px;font-size:6.2px;line-height:7px;color:#f4f4f4;font-weight:bold;letter-spacing:.35px;white-space:nowrap">GUIYANG AIRPORT</div>
<!-- Express logo -->
<div class="abs" style="left:284px;top:109px;width:107px;height:52px;background:#fff;box-shadow:0 1px 1px rgba(0,0,0,.15)">
  <div class="abs" style="left:52px;top:0;width:1px;height:52px;background:#b8cfc4"></div>
  <svg class="abs" style="left:0;top:0" width="52" height="52" viewBox="0 0 52 52">
    <path d="M25 5 C22 15 19 30 16 42" stroke="#226248" stroke-width="4" fill="none" stroke-linecap="round"/>
    <path d="M40 9 C36 20 33 32 28 46" stroke="#226248" stroke-width="4" fill="none" stroke-linecap="round"/>
    <path d="M4 35 C16 28 30 25 52 25" stroke="#226248" stroke-width="3.5" fill="none"/>
  </svg>
  <div class="abs" style="left:58px;top:9px;font-size:7px;line-height:8px;color:#226248;font-style:italic;white-space:nowrap"><i>智</i><i>选</i><i>假</i><i>日</i><i>酒</i><i>店</i></div>
  <div class="abs" style="left:57px;top:18px;font-size:10px;line-height:11px;color:#226248;font-style:italic;letter-spacing:-.6px;white-space:nowrap">Holiday Inn</div>
  <div class="abs" style="left:57px;top:28px;font-size:14px;line-height:15px;color:#226248;font-style:italic;letter-spacing:-.5px;white-space:nowrap">Express</div>
</div>
<div class="abs" style="left:297px;top:168px;font-size:10px;line-height:11px;color:#e6eeea;--ls:.4px;white-space:nowrap"><i>洲</i><i>际</i><i>酒</i><i>店</i><i>集</i><i>团</i><i>旗</i></div>
<div class="abs" style="left:317px;top:186px;font-size:9px;line-height:10px;color:#e6eeea;--ls:2.5px;white-space:nowrap"><i>贵</i><i>阳</i><i>机</i><i>场</i></div>
<div class="abs" style="left:303px;top:197px;font-size:9px;line-height:10px;color:#e6eeea;white-space:nowrap">GUIYANG AIRPOI</div>

<!-- network / this pc icons (overlapping logo) -->
<div class="ic" style="left:76px;top:100px"><svg class="si" viewBox="0 0 48 48"><use href="#network"/></svg><div class="lb"><i>网</i><i>络</i></div></div>
<div class="ic" style="left:152px;top:100px"><svg class="si" viewBox="0 0 48 48"><use href="#monitor"/></svg><div class="lb"><i>此</i><i>电</i><i>脑</i></div></div>

<div class="ic" style="left:0px;top:0px"><svg class="si" viewBox="0 0 48 48"><use href="#recycle"/></svg><div class="lb"><i>回</i><i>收</i><i>站</i></div></div>
<div class="ic" style="left:76px;top:0px"><svg class="si" viewBox="0 0 48 48"><use href="#printer"/><use href="#sc"/></svg><div class="lb">HP LaserJet<br>Pro M404-...</div></div>
<div class="ic" style="left:152px;top:0px"><svg class="si" viewBox="0 0 48 48"><use href="#publisher"/><use href="#sc"/></svg><div class="lb">Publisher</div></div>
<div class="ic" style="left:228px;top:0px"><svg class="si" viewBox="0 0 48 48"><use href="#folderpdf"/></svg><div class="lb"><i>洲</i><i>际</i></div></div>
<div class="ic" style="left:304px;top:0px"><svg class="si" viewBox="0 0 48 48"><use href="#xls"/></svg><div class="lb"><i>每</i><i>日</i><i>值</i><i>班</i><i>经</i><i>理</i><br><i>记</i><i>录</i>MOD1...</div></div>
<div class="ic" style="left:228px;top:100px"><svg class="si" viewBox="0 0 48 48"><use href="#folderdoc"/></svg><div class="lb"><i>客</i><i>信</i><i>类</i><i>型</i></div></div>
<div class="ic" style="left:0px;top:200px"><svg class="si" viewBox="0 0 48 48"><use href="#chromelogo"/><use href="#sc"/></svg><div class="lb">Google<br>Chrome</div></div>
<div class="ic" style="left:76px;top:200px"><svg class="si" viewBox="0 0 48 48"><use href="#hpprint"/><use href="#sc"/></svg><div class="lb">HP Print<br>Scan Doct...</div></div>
<div class="ic" style="left:152px;top:200px"><svg class="si" viewBox="0 0 48 48"><use href="#qywx"/><use href="#sc"/></svg><div class="lb"><i>企</i><i>业</i><i>微</i><i>信</i></div></div>
<div class="ic" style="left:228px;top:200px"><svg class="si" viewBox="0 0 48 48"><use href="#folder"/></svg><div class="lb">HP</div></div>
<div class="ic" style="left:0px;top:300px"><svg class="si" viewBox="0 0 48 48"><use href="#acrobat"/><use href="#sc"/></svg><div class="lb">Adobe<br>Acrobat</div></div>
<div class="ic" style="left:76px;top:300px"><svg class="si" viewBox="0 0 48 48"><use href="#scanner"/><use href="#sc"/></svg><div class="lb">HP LJ<br>M1271...</div></div>
<div class="ic" style="left:152px;top:300px"><svg class="si" viewBox="0 0 48 48"><use href="#folder"/></svg><div class="lb"><i>财</i><i>务</i><i>预</i><i>算</i></div></div>
<div class="ic" style="left:228px;top:300px"><svg class="si" viewBox="0 0 48 48"><use href="#folderdoc"/></svg><div class="lb"><i>保</i><i>险</i><i>报</i><i>销</i></div></div>
<div class="ic" style="left:0px;top:400px"><svg class="si" viewBox="0 0 48 48"><use href="#crs"/><use href="#sc"/></svg><div class="lb">Saflok_CRS</div></div>
<div class="ic" style="left:76px;top:400px"><svg class="si" viewBox="0 0 48 48"><use href="#outlook"/><use href="#sc"/></svg><div class="lb">Outlook</div></div>
<div class="ic" style="left:152px;top:400px"><svg class="si" viewBox="0 0 48 48"><use href="#folderdoc"/></svg><div class="lb">GSM</div></div>
<div class="ic" style="left:228px;top:400px"><svg class="si" viewBox="0 0 48 48"><use href="#doc"/></svg><div class="lb">MOD<i>权</i><i>限</i><i>申</i><br><i>请</i><i>表</i></div></div>
<div class="ic" style="left:0px;top:500px"><svg class="si" viewBox="0 0 48 48"><use href="#hplogo"/><use href="#sc"/></svg><div class="lb">HP LaserJet<br>Pro MFP ...</div></div>
<div class="ic" style="left:76px;top:500px"><svg class="si" viewBox="0 0 48 48"><use href="#buyprinter"/><use href="#sc"/></svg><div class="lb"><i>购</i><i>买</i><i>耗</i><i>材</i> -<br>HP LaserJ...</div></div>
<div class="ic" style="left:152px;top:500px"><svg class="si" viewBox="0 0 48 48"><use href="#folderpdf"/></svg><div class="lb"><i>前</i><i>厅</i></div></div>
<div class="ic" style="left:228px;top:500px"><svg class="si" viewBox="0 0 48 48"><use href="#doc"/></svg><div class="lb"><i>针</i><i>对</i><i>性</i><i>回</i><i>复</i></div></div>
<div class="ic" style="left:0px;top:600px"><svg class="si" viewBox="0 0 48 48"><use href="#xlsapp"/><use href="#sc"/></svg><div class="lb">Excel</div></div>
<div class="ic" style="left:76px;top:600px"><svg class="si" viewBox="0 0 48 48"><use href="#pptapp"/><use href="#sc"/></svg><div class="lb">PowerPoint</div></div>
<div class="ic" style="left:152px;top:600px"><svg class="si" viewBox="0 0 48 48"><use href="#folderxls"/></svg><div class="lb"><i>绩</i><i>效</i><i>考</i><i>核</i></div></div>
<div class="ic" style="left:228px;top:600px"><svg class="si" viewBox="0 0 48 48"><use href="#doc"/></svg><div class="lb"><i>好</i><i>评</i><i>回</i><i>复</i><i>模</i><i>板</i></div></div>
<div class="ic" style="left:0px;top:700px"><svg class="si" viewBox="0 0 48 48"><use href="#kunlun"/><use href="#sc"/></svg><div class="lb">KunlunVat...<br>- <i>快</i><i>捷</i><i>方</i><i>式</i></div></div>
<div class="ic" style="left:76px;top:700px"><svg class="si" viewBox="0 0 48 48"><use href="#wordapp"/><use href="#sc"/></svg><div class="lb">Word</div></div>
<div class="ic" style="left:152px;top:700px"><svg class="si" viewBox="0 0 48 48"><use href="#folder"/></svg><div class="lb">ing<i>会</i><i>员</i><i>培</i><i>训</i><br><i>证</i><i>书</i></div></div>
<div class="ic" style="left:228px;top:700px"><svg class="si" viewBox="0 0 48 48"><use href="#xls"/></svg><div class="lb">HB<i>问</i><i>卷</i><i>统</i><i>计</i><br>2025</div></div>
<div class="ic" style="left:0px;top:800px"><svg class="si" viewBox="0 0 48 48"><use href="#wxfile"/><use href="#sc"/></svg><div class="lb"><i>微</i><i>信</i></div></div>
<div class="ic" style="left:76px;top:800px"><svg class="si" viewBox="0 0 48 48"><use href="#edge"/><use href="#sc"/></svg><div class="lb">Microsoft<br>Edge</div></div>
<div class="ic" style="left:152px;top:800px"><svg class="si" viewBox="0 0 48 48"><use href="#folderdoc"/></svg><div class="lb"><i>风</i><i>险</i><i>案</i><i>例</i><i>分</i><i>享</i></div></div>
<div class="ic" style="left:228px;top:800px"><svg class="si" viewBox="0 0 48 48"><use href="#xls2"/></svg><div class="lb"><i>新</i><i>版</i><i>付</i><i>款</i><i>申</i><i>请</i><br><i>表</i>-<i>有</i><i>公</i><i>式</i></div></div>
<div class="ic" style="left:0px;top:900px"><svg class="si" viewBox="0 0 48 48"><use href="#key"/><use href="#sc"/></svg><div class="lb">Saflok_Cli...</div></div>
<div class="ic" style="left:76px;top:900px"><svg class="si" viewBox="0 0 48 48"><use href="#potplayer"/><use href="#sc"/></svg><div class="lb">PotPlayer 64<br>bit</div></div>
<div class="ic" style="left:152px;top:900px"><svg class="si" viewBox="0 0 48 48"><use href="#folderxls"/></svg><div class="lb"><i>团</i><i>队</i><i>报</i><i>告</i></div></div>
<div class="ic" style="left:532px;top:0px"><svg class="si" viewBox="0 0 48 48"><use href="#edge"/><use href="#sc"/></svg><div class="lb">SHIJI</div></div>
<div class="ic" style="left:608px;top:0px"><svg class="si" viewBox="0 0 48 48"><use href="#edge"/></svg><div class="lb">--<i>贵</i><i>阳</i><i>机</i><i>场</i><i>假</i><br><i>日</i><i>酒</i><i>店</i><i>群</i><i>网</i>...</div></div>
<div class="ic" style="left:684px;top:0px"><svg class="si" viewBox="0 0 48 48"><use href="#edge"/><use href="#sc"/></svg><div class="lb"><i>携</i><i>程</i><i>后</i><i>台</i></div></div>
<div class="ic" style="left:760px;top:0px"><svg class="si" viewBox="0 0 48 48"><use href="#edge"/><use href="#sc"/></svg><div class="lb"><i>美</i><i>团</i></div></div>
<div class="ic" style="left:836px;top:0px"><svg class="si" viewBox="0 0 48 48"><use href="#edge"/><use href="#sc"/></svg><div class="lb"><i>停</i><i>车</i></div></div>
<div class="ic" style="left:912px;top:0px"><svg class="si" viewBox="0 0 48 48"><use href="#edge"/><use href="#sc"/></svg><div class="lb"><i>发</i><i>票</i><i>后</i><i>台</i></div></div>
<div class="ic" style="left:988px;top:0px"><svg class="si" viewBox="0 0 48 48"><use href="#edge"/><use href="#sc"/></svg><div class="lb">AI</div></div>
<div class="ic" style="left:1064px;top:0px"><svg class="si" viewBox="0 0 48 48"><use href="#edge"/><use href="#sc"/></svg><div class="lb"><i>紫</i><i>楠</i></div></div>
<div class="ic" style="left:1140px;top:0px"><svg class="si" viewBox="0 0 48 48"><use href="#edge"/><use href="#sc"/></svg><div class="lb"><i>洲</i><i>际</i><i>商</i><i>城</i></div></div>
<div class="ic" style="left:1216px;top:0px"><svg class="si" viewBox="0 0 48 48"><use href="#edge"/><use href="#sc"/></svg><div class="lb"><i>飞</i><i>猪</i></div></div>
<div class="ic" style="left:1292px;top:0px"><svg class="si" viewBox="0 0 48 48"><use href="#edge"/><use href="#sc"/></svg><div class="lb"><i>网</i><i>易</i><i>邮</i><i>箱</i></div></div>
<div class="ic" style="left:1368px;top:0px"><svg class="si" viewBox="0 0 48 48"><use href="#edge"/><use href="#sc"/></svg><div class="lb"><i>付</i><i>讯</i></div></div>
<div class="ic" style="left:1444px;top:0px"><svg class="si" viewBox="0 0 48 48"><use href="#edge"/><use href="#sc"/></svg><div class="lb"><i>抖</i><i>音</i></div></div>
<div class="ic" style="left:532px;top:100px"><svg class="si" viewBox="0 0 48 48"><use href="#edge"/><use href="#sc"/></svg><div class="lb">Booking</div></div>
<div class="ic" style="left:608px;top:100px"><svg class="si" viewBox="0 0 48 48"><use href="#edge"/><use href="#sc"/></svg><div class="lb">Expedia</div></div>
<div class="ic" style="left:684px;top:100px"><svg class="si" viewBox="0 0 48 48"><use href="#edge"/><use href="#sc"/></svg><div class="lb">hotelbeds</div></div>
<div class="ic" style="left:760px;top:100px"><svg class="si" viewBox="0 0 48 48"><use href="#edge"/><use href="#sc"/></svg><div class="lb">Agoda</div></div>
<div class="ic" style="left:836px;top:100px"><svg class="si" viewBox="0 0 48 48"><use href="#edge"/><use href="#sc"/></svg><div class="lb"><i>考</i><i>勤</i></div></div>
<div class="ic" style="left:912px;top:100px"><svg class="si" viewBox="0 0 48 48"><use href="#edge"/><use href="#sc"/></svg><div class="lb"><i>中</i><i>农</i><i>订</i><i>房</i></div></div>
<div class="ic" style="left:988px;top:100px"><svg class="si" viewBox="0 0 48 48"><use href="#txt"/></svg><div class="lb"><i>新</i><i>建</i> <i>文</i><i>本</i><i>文</i><br><i>档</i></div></div>
<div class="ic" style="left:1672px;top:0px"><svg class="si" viewBox="0 0 48 48"><use href="#chromefile"/></svg><div class="lb">Free Room<br>Upgrade ...</div></div>
<div class="ic" style="left:1748px;top:0px"><svg class="si" viewBox="0 0 48 48"><use href="#chromefile"/></svg><div class="lb"><i>假</i><i>日</i><i>楼</i><i>层</i><i>平</i><i>面</i><br><i>图</i><i>及</i><i>房</i><i>型</i><i>统</i>...</div></div>
<div class="ic" style="left:1824px;top:0px"><svg class="si" viewBox="0 0 48 48"><use href="#xls"/></svg><div class="lb">GC Retail<br>Rate Car...</div></div>
<div class="ic" style="left:1748px;top:100px"><svg class="si" viewBox="0 0 48 48"><use href="#xls"/></svg><div class="lb"><i>假</i><i>日</i><i>酒</i><i>店</i> AR<br><i>应</i><i>收</i><i>账</i><i>号</i></div></div>
<div class="ic" style="left:1824px;top:100px"><svg class="si" viewBox="0 0 48 48"><use href="#xls"/></svg><div class="lb"><i>房</i><i>型</i>-KWEAP</div></div>
<div class="ic" style="left:1748px;top:200px"><svg class="si" viewBox="0 0 48 48"><use href="#xls2"/></svg><div class="lb">KWEAP<br>GSM Dai...</div></div>
<div class="ic" style="left:1824px;top:200px"><svg class="si" viewBox="0 0 48 48"><use href="#xls"/></svg><div class="lb"><i>通</i><i>联</i>POS <i>撤</i><br><i>销</i>(2)</div></div>
<div class="ic" style="left:1748px;top:300px"><svg class="si" viewBox="0 0 48 48"><use href="#ratecat"/></svg><div class="lb"><i>假</i><i>日</i>HI Rate<br>Category-...</div></div>
<div class="ic" style="left:1824px;top:300px"><svg class="si" viewBox="0 0 48 48"><use href="#xls"/></svg><div class="lb"><i>团</i><i>队</i><i>招</i><i>募</i><i>登</i><i>记</i></div></div>
<div class="ic" style="left:1748px;top:400px"><svg class="si" viewBox="0 0 48 48"><use href="#xls"/></svg><div class="lb">TMC<i>介</i><i>绍</i><i>总</i><br><i>页</i>(2)</div></div>
<div class="ic" style="left:1824px;top:400px"><svg class="si" viewBox="0 0 48 48"><use href="#xls2"/></svg><div class="lb">GSA Check<br>List</div></div>
<div class="ic" style="left:1748px;top:500px"><svg class="si" viewBox="0 0 48 48"><use href="#chromefile"/></svg><div class="lb">dormakaba<br><i>灯</i><i>号</i><i>说</i><i>明</i> -...</div></div>
<div class="ic" style="left:1824px;top:500px"><svg class="si" viewBox="0 0 48 48"><use href="#xls"/></svg><div class="lb"><i>前</i><i>厅</i><i>部</i>-11<i>月</i><br><i>资</i><i>金</i><i>计</i><i>划</i><i>表</i></div></div>
<div class="ic" style="left:1748px;top:600px"><svg class="si" viewBox="0 0 48 48"><use href="#xls"/></svg><div class="lb"><i>服</i><i>务</i><i>费</i><i>费</i><i>率</i></div></div>
<div class="ic" style="left:1824px;top:600px"><svg class="si" viewBox="0 0 48 48"><use href="#xls"/></svg><div class="lb">IHG<i>酒</i><i>店</i><i>代</i><i>码</i><br>20240409(1)</div></div>

<!-- quote mark on wallpaper -->
<svg class="abs" style="left:1317px;top:520px" width="80" height="50" viewBox="0 0 80 50">
  <rect x="0" y="8" width="12" height="16" fill="#fff"/>
  <path d="M28 2 C22 2 18 6 18 12 C18 17 21 20 25 21 L20 43 H32 L40 20 C41 17 42 14 42 12 C42 6 38 2 30 2 Z" fill="#f7f7f7"/>
  <path d="M56 2 C50 2 46 6 46 12 C46 17 49 20 53 21 L48 43 H60 L68 20 C69 17 70 14 70 12 C70 6 66 2 58 2 Z" fill="#fff"/>
</svg>

<!-- WeChat window -->
<div id="wx">
  <div id="wxside">
    <svg class="abs" style="left:16px;top:607px" width="22" height="22" viewBox="0 0 22 22"><circle cx="11" cy="11" r="9.5" fill="none" stroke="#8c8c8c" stroke-width="1.1"/><path d="M6.5 12.5 C6.5 15 9.5 15.5 10.5 13.5 L12 8.5 C13 6.5 15.5 7 15.5 9.5" fill="none" stroke="#8c8c8c" stroke-width="1.1"/></svg>
    <svg class="abs" style="left:19px;top:649px" width="16" height="22" viewBox="0 0 16 22"><rect x="2" y="1.5" width="12" height="19" rx="1" fill="none" stroke="#8a8a8a" stroke-width="1.2"/><path d="M6 17 H10" stroke="#8a8a8a" stroke-width="1.2"/></svg>
    <svg class="abs" style="left:17px;top:688px" width="22" height="20" viewBox="0 0 22 20"><path d="M2 5 H17 M2 11 H17 M2 17 H17" stroke="#8a8a8a" stroke-width="1.3"/><circle cx="18" cy="4" r="3.5" fill="#f04b4b"/></svg>
  </div>
  <div id="wxlist">
    <div class="chat" style="top:496px"><svg class="av" viewBox="0 0 40 40" style="border-radius:3px"><rect width="40" height="40" fill="#5f86a8"/><path d="M0 4 C6 0 12 8 18 3 C24 -1 30 6 40 2 V18 C32 22 26 14 20 18 C12 22 6 14 0 18 Z" fill="#dfe8ee"/><path d="M0 22 C8 20 12 28 20 24 C28 20 32 28 40 24 V34 H0 Z" fill="#c9d8e2"/><path d="M17 40 L19 8 C20 4 23 4 23 8 L26 40 Z" fill="#6a5a3a"/><path d="M0 34 H40 V40 H0 Z" fill="#4d7a3a"/></svg><div class="cm"><i>行</i></div></div>
    <div class="chat" style="top:560px"><svg class="av" viewBox="0 0 40 40" style="border-radius:3px"><rect width="40" height="40" fill="#c9d3d6"/><rect y="18" width="40" height="6" fill="#9aa8ac"/><path d="M0 0 H40 V8 C34 12 30 6 26 10 C22 4 16 12 12 6 C8 10 4 4 0 10 Z" fill="#2f4a2c"/><path d="M2 0 C8 6 4 14 0 20 Z M30 2 C36 8 40 6 40 14 V0 Z M12 2 C16 4 20 2 22 6 C18 8 14 6 12 2 Z" fill="#3d5e36"/><path d="M9 8 L10 30 M25 6 L24 28" stroke="#5a5040" stroke-width="1.2"/><path d="M0 22 C8 24 12 18 16 26 H40 V30 H0 Z" fill="#4f7c3c"/><path d="M28 16 C34 18 38 16 40 18 V28 H26 Z" fill="#5b8a44"/><rect y="28" width="40" height="4" fill="#7f9a72"/><rect y="32" width="40" height="8" fill="#2e5a5c"/><circle cx="15" cy="27" r="1.5" fill="#222"/></svg><div class="cn">Marcom-Karen</div><div class="ct">11:54</div><div class="cm"><i>你</i><i>别</i><i>一</i><i>会</i><i>把</i><i>我</i><i>忘</i><i>了</i></div></div>
    <div class="chat" style="top:624px"><svg class="av" viewBox="0 0 40 40" style="border-radius:3px"><rect width="40" height="40" fill="#4a3a34"/><path d="M8 40 C6 30 4 20 8 10 C12 2 28 2 32 10 C36 20 34 30 32 40 Z" fill="#3a2a24"/><path d="M11 14 C14 10 26 10 29 14 C31 22 30 30 25 35 C22 38 18 38 15 35 C10 30 9 22 11 14 Z" fill="#efd2cc"/><path d="M9 12 C14 6 28 6 31 12 L31 16 C26 12 14 12 9 16 Z" fill="#3a2a24"/><ellipse cx="15.5" cy="19" rx="2" ry="1.4" fill="#3a3a50"/><ellipse cx="25" cy="19" rx="2" ry="1.4" fill="#3a3a50"/><ellipse cx="13" cy="24" rx="3" ry="2" fill="#f0b6b8" opacity=".8"/><ellipse cx="27" cy="24" rx="3" ry="2" fill="#f0b6b8" opacity=".8"/><path d="M17 29 C19 28 22 28 23 29 C22 31 18 31 17 29 Z" fill="#d9606a"/><path d="M0 36 H40 V40 H0 Z" fill="#5a4c5a"/></svg><div class="cn"><i>前</i><i>厅</i>-<i>袁</i><i>宇</i><i>嵘</i><i>鸣</i></div><div class="ct"><i>昨</i><i>天</i></div><div class="cm"><i>好</i><i>滴</i><i>好</i><i>滴</i></div></div>
    <div class="chat" style="top:688px"><svg class="av" viewBox="0 0 40 40" style="border-radius:3px"><rect width="40" height="40" fill="#fdf6f1"/><path d="M0 20 C4 10 16 6 26 8 C34 10 40 16 40 22 V40 H0 Z" fill="#f7c9c9" stroke="#6a4a4a" stroke-width=".8"/><circle cx="18" cy="17" r="1.3" fill="#6a4a4a"/><circle cx="28" cy="16" r="1.3" fill="#6a4a4a"/><ellipse cx="12" cy="20" rx="3" ry="1.5" fill="#ee8f9a"/><ellipse cx="34" cy="19" rx="3" ry="1.5" fill="#ee8f9a"/><path d="M14 22 C18 28 28 28 32 22 V30 C28 34 18 34 14 30 Z" fill="#fff" stroke="#6a4a4a" stroke-width=".8"/><path d="M19 24 V31 M23 25 V32 M27 24 V31" stroke="#6a4a4a" stroke-width=".6"/></svg><div class="cn"><i>前</i><i>厅</i>-Lena <i>谭</i><i>玲</i><i>丽</i></div><div class="ct"><i>昨</i><i>天</i></div><div class="cm"><i>好</i><i>的</i></div></div>
  </div>
  <div class="act" style="left:423px"></div><div class="act" style="left:498px"></div><div class="act" style="left:573px"></div><div class="act" style="left:648px"></div><div class="act" style="left:723px"></div>
  <svg class="abs" style="left:433px;top:588px" width="24" height="24" viewBox="0 0 24 24"><path d="M5 20 C5 13 9 9 15 9 V5 L21 11 L15 17 V13 C10 13 7 15 5 20 Z" fill="none" stroke="#333" stroke-width="1.3" stroke-linejoin="round"/></svg>
  <svg class="abs" style="left:508px;top:588px" width="24" height="24" viewBox="0 0 24 24"><path d="M3 10 H9 M3 14 H9 M3 19 H19 M12 15 C12 11 14 8 18 8 M16 5 L19 8 L16 11" fill="none" stroke="#333" stroke-width="1.3"/></svg>
  <svg class="abs" style="left:583px;top:588px" width="24" height="24" viewBox="0 0 24 24"><path d="M12 3 L20 7.5 V16.5 L12 21 L4 16.5 V7.5 Z M4 7.5 L12 12 L20 7.5 M12 12 V21" fill="none" stroke="#333" stroke-width="1.3" stroke-linejoin="round"/></svg>
  <svg class="abs" style="left:658px;top:588px" width="24" height="24" viewBox="0 0 24 24"><path d="M8 6 H4 V20 H20 V6 H16 M12 3 V15 M8 11 L12 15 L16 11" fill="none" stroke="#333" stroke-width="1.3"/></svg>
  <svg class="abs" style="left:733px;top:588px" width="24" height="24" viewBox="0 0 24 24"><path d="M3 6 H21 M9 6 V3.5 H15 V6 M5.5 6 L7 21 H17 L18.5 6 M10 10 V17 M14 10 V17" fill="none" stroke="#333" stroke-width="1.3"/></svg>
  <div class="actl" style="left:405px"><i>逐</i><i>条</i><i>转</i><i>发</i></div><div class="actl" style="left:480px"><i>合</i><i>并</i><i>转</i><i>发</i></div><div class="actl" style="left:555px"><i>收</i><i>藏</i></div><div class="actl" style="left:630px"><i>保</i><i>存</i></div><div class="actl" style="left:705px"><i>删</i><i>除</i></div>
  
</div>

<!-- Dialog -->
<div id="dlg">
  <div id="ttl">
    <svg class="abs" style="left:8px;top:7px" width="16" height="13.3" viewBox="0 0 24 20"><use href="#wechat"/></svg>
    <div class="t" style="left:29px;top:6px;font-size:12px;color:#000"><i>选</i><i>择</i><i>文</i><i>件</i><i>夹</i></div>
    <svg class="abs" style="left:922px;top:7px" width="14" height="14" viewBox="0 0 14 14"><path d="M2 2 L12 12 M12 2 L2 12" stroke="#222" stroke-width="1.1"/></svg>
  </div>
  <div id="nav">
    <svg class="abs" style="left:13px;top:19px" width="16" height="16" viewBox="0 0 16 16"><path d="M14 8 H2.5 M7.5 3 L2.5 8 L7.5 13" fill="none" stroke="#9a9a9a" stroke-width="1.1"/></svg>
    <svg class="abs" style="left:47px;top:19px" width="16" height="16" viewBox="0 0 16 16"><path d="M2 8 H13.5 M8.5 3 L13.5 8 L8.5 13" fill="none" stroke="#9a9a9a" stroke-width="1.1"/></svg>
    <svg class="abs" style="left:80px;top:21px" width="12" height="12" viewBox="0 0 12 12"><path d="M2 4 L6 8 L10 4" fill="none" stroke="#9a9a9a" stroke-width="1.1"/></svg>
    <svg class="abs" style="left:107px;top:18px" width="16" height="16" viewBox="0 0 16 16"><path d="M8 14 V2.5 M3 7.5 L8 2.5 L13 7.5" fill="none" stroke="#333" stroke-width="1.1"/></svg>
    <div class="box" style="left:137px;top:10px;width:582px;height:35px">
      <svg class="abs" style="left:8px;top:8px" width="17" height="17" viewBox="0 0 48 48"><use href="#folder"/></svg>
      <div class="t" style="left:32px;top:8px;color:#333;font-size:13px">›</div>
      <div class="t" style="left:46px;top:8px;color:#1a1a1a"><i>桌</i><i>面</i></div>
      <div class="t" style="left:81px;top:8px;color:#333;font-size:13px">›</div>
      <div class="t" style="left:95px;top:8px;color:#1a1a1a"><i>前</i><i>厅</i></div>
      <div class="t" style="left:130px;top:8px;color:#333;font-size:13px">›</div>
      <svg class="abs" style="left:520px;top:11px" width="12" height="12" viewBox="0 0 12 12"><path d="M2 4 L6 8 L10 4" fill="none" stroke="#555" stroke-width="1.1"/></svg>
      <svg class="abs" style="left:554px;top:9px" width="16" height="16" viewBox="0 0 16 16"><path d="M13 8 A5 5 0 1 1 11.5 4.5 M12 1.5 V5 H8.5" fill="none" stroke="#555" stroke-width="1.1"/></svg>
    </div>
    <div class="box" style="left:730px;top:10px;width:202px;height:35px">
      <div class="t" style="left:9px;top:9px;color:#6a6a6a"><i>在</i> <i>前</i><i>厅</i> <i>中</i><i>搜</i><i>索</i></div>
      <svg class="abs" style="left:174px;top:9px" width="16" height="16" viewBox="0 0 16 16"><circle cx="9.5" cy="6.5" r="3.8" fill="none" stroke="#444" stroke-width="1.1"/><path d="M6.8 9.2 L2.5 13.5" stroke="#444" stroke-width="1.2"/></svg>
    </div>
  </div>
  <div id="cmd">
    <div class="t" style="left:18px;top:8px;color:#1a2a40"><i>组</i><i>织</i></div>
    <svg class="abs" style="left:45px;top:13px" width="8" height="6" viewBox="0 0 8 6"><path d="M0 0 H8 L4 5 Z" fill="#1a2a40"/></svg>
    <div class="t" style="left:86px;top:8px;color:#1a2a40"><i>新</i><i>建</i><i>文</i><i>件</i><i>夹</i></div>
    <svg class="abs" style="left:851px;top:9px" width="14" height="14" viewBox="0 0 14 14"><path d="M1 2.5 H13 M1 5.5 H13 M1 8.5 H13 M1 11.5 H13" stroke="#111" stroke-width="1.2"/></svg>
    <svg class="abs" style="left:875px;top:13px" width="8" height="6" viewBox="0 0 8 6"><path d="M0 0 H8 L4 5 Z" fill="#1a2a40"/></svg>
    <svg class="abs" style="left:912px;top:7px" width="18" height="18" viewBox="0 0 18 18"><circle cx="9" cy="9" r="8.3" fill="#1a7fd6"/><text x="9" y="13.3" text-anchor="middle" font-family="Liberation Sans" font-weight="bold" font-size="12" fill="#fff">?</text></svg>
  </div>
  <div id="navpane">
    <div class="abs" style="left:2px;top:6px;width:137px;height:32px;background:#d9d9d9;border:1px solid #a6a6a6"></div>
    <svg class="abs" style="left:33px;top:13px" width="17" height="17" viewBox="0 0 17 17"><path d="M1.5 8.5 L8.5 2 L15.5 8.5" fill="none" stroke="#e5671e" stroke-width="2"/><path d="M3.5 8 V15.5 H7 V11 H10 V15.5 H13.5 V8 L8.5 3.5 Z" fill="#b9b9b9"/></svg>
    <div class="t" style="left:55px;top:14px;color:#000"><i>主</i><i>文</i><i>件</i><i>夹</i></div>
    <svg class="abs" style="left:12px;top:48px" width="10" height="10" viewBox="0 0 10 10"><path d="M3 1.5 L6.5 5 L3 8.5" fill="none" stroke="#555" stroke-width="1.1"/></svg>
    <svg class="abs" style="left:33px;top:47px" width="17" height="12" viewBox="0 0 17 12"><path d="M4 11.5 C1.5 11.5 0.5 9.5 0.5 8 C0.5 6 2 4.8 3.8 4.8 C4.5 2 6.8 0.5 9.2 0.5 C12 0.5 14 2.5 14.3 5.2 C16 5.5 16.7 7 16.7 8.3 C16.7 10.2 15.3 11.5 13.5 11.5 Z" fill="#1f7ee8"/><path d="M6 11.5 C5 9 7 6.5 10 6.5 C12.5 6.5 14 8 14.5 9.5" fill="#5ab3f5" opacity=".7"/></svg>
    <div class="t" style="left:55px;top:46px;color:#000">OneDrive</div>
    <div class="abs" style="left:10px;top:86px;width:121px;height:1px;background:#dedede"></div>
    <svg class="abs" style="left:11px;top:112px" width="12" height="10" viewBox="0 0 12 10"><path d="M1.5 2.5 L6 7 L10.5 2.5" fill="none" stroke="#222" stroke-width="1.2"/></svg>
    <svg class="abs" style="left:33px;top:109px" width="17" height="16" viewBox="0 0 17 16"><rect x="0.5" y="0.5" width="16" height="11" rx="1" fill="#1fa6d8"/><rect x="1" y="1" width="15" height="10" fill="url(#gMon)"/><rect x="7" y="12" width="3" height="2" fill="#888"/><rect x="4.5" y="14" width="8" height="1.2" fill="#888"/></svg>
    <div class="t" style="left:55px;top:109px;color:#000"><i>此</i><i>电</i><i>脑</i></div>
    <div class="abs" style="left:0;top:136px;width:140px">
      <svg class="abs" style="left:20px;top:10px" width="10" height="10" viewBox="0 0 10 10"><path d="M3 1.5 L6.5 5 L3 8.5" fill="none" stroke="#555" stroke-width="1.1"/></svg>
      <svg class="abs" style="left:41px;top:5px" width="17" height="17" viewBox="0 0 17 17"><rect x="1" y="1" width="3" height="3" fill="#1f8ee8"/><rect x="5" y="1" width="3" height="3" fill="#1f8ee8"/><rect x="1" y="5" width="3" height="3" fill="#1f8ee8"/><rect x="5" y="5" width="3" height="3" fill="#1f8ee8"/><path d="M3 10 H13 L15 13 V15 H3 Z" fill="#dcdcdc"/><rect x="3" y="13" width="12" height="2.2" fill="#333"/></svg>
      <div class="t" style="left:63px;top:6px;color:#000">Windows (C:)</div>
    </div>
    <div class="abs" style="left:0;top:168px;width:140px">
      <svg class="abs" style="left:20px;top:10px" width="10" height="10" viewBox="0 0 10 10"><path d="M3 1.5 L6.5 5 L3 8.5" fill="none" stroke="#555" stroke-width="1.1"/></svg>
      <svg class="abs" style="left:41px;top:5px" width="17" height="17" viewBox="0 0 17 17"><path d="M2 9 H15 V13 H2 Z" fill="#e0e0e0"/><rect x="2" y="11" width="13" height="2.5" fill="#333"/></svg>
      <div class="t" style="left:63px;top:6px;color:#000"><i>新</i><i>加</i><i>卷</i> (D:)</div>
    </div>
    <div class="abs" style="left:0;top:200px;width:140px">
      <svg class="abs" style="left:20px;top:10px" width="10" height="10" viewBox="0 0 10 10"><path d="M3 1.5 L6.5 5 L3 8.5" fill="none" stroke="#555" stroke-width="1.1"/></svg>
      <svg class="abs" style="left:41px;top:5px" width="17" height="17" viewBox="0 0 17 17"><path d="M2 9 H15 V13 H2 Z" fill="#e0e0e0"/><rect x="2" y="11" width="13" height="2.5" fill="#333"/></svg>
      <div class="t" style="left:63px;top:6px;color:#000"><i>新</i><i>加</i><i>卷</i> (E:)</div>
    </div>
    <div class="abs" style="left:0;top:232px;width:140px">
      <svg class="abs" style="left:20px;top:10px" width="10" height="10" viewBox="0 0 10 10"><path d="M3 1.5 L6.5 5 L3 8.5" fill="none" stroke="#555" stroke-width="1.1"/></svg>
      <svg class="abs" style="left:41px;top:5px" width="17" height="17" viewBox="0 0 17 17"><path d="M2 7 H15 V15 H2 Z" fill="#e0e0e0"/><rect x="2" y="10" width="13" height="2.2" fill="#333"/><rect x="2" y="13" width="13" height="2.2" fill="#2fbf4f"/></svg>
      <div class="t" style="left:63px;top:6px;color:#000">FO (N:)</div>
    </div>
    <div class="abs" style="left:0;top:264px;width:140px">
      <svg class="abs" style="left:20px;top:10px" width="10" height="10" viewBox="0 0 10 10"><path d="M3 1.5 L6.5 5 L3 8.5" fill="none" stroke="#555" stroke-width="1.1"/></svg>
      <svg class="abs" style="left:41px;top:5px" width="17" height="17" viewBox="0 0 17 17"><path d="M2 7 H15 V15 H2 Z" fill="#e0e0e0"/><rect x="2" y="10" width="13" height="2.2" fill="#333"/><rect x="2" y="13" width="13" height="2.2" fill="#2fbf4f"/></svg>
      <div class="t" style="left:63px;top:6px;color:#000">Public DISK (I</div>
    </div>
    <div class="abs" style="left:0;top:296px;width:140px">
      <svg class="abs" style="left:20px;top:10px" width="10" height="10" viewBox="0 0 10 10"><path d="M3 1.5 L6.5 5 L3 8.5" fill="none" stroke="#555" stroke-width="1.1"/></svg>
      <svg class="abs" style="left:41px;top:5px" width="17" height="17" viewBox="0 0 17 17"><path d="M2 7 H15 V15 H2 Z" fill="#e0e0e0"/><rect x="2" y="10" width="13" height="2.2" fill="#333"/><rect x="2" y="13" width="13" height="2.2" fill="#2fbf4f"/></svg>
      <div class="t" style="left:63px;top:6px;color:#000">SaflokData (\</div>
    </div>
  </div>
  <div id="navtrack"><div class="abs" style="left:7px;top:17px;width:2px;height:241px;background:#858585;border-radius:1px"></div></div>
  <div id="list">
    <div class="t" style="left:34px;top:6px;color:#4c607a"><i>名</i><i>称</i></div>
    <svg class="abs" style="left:146px;top:0px" width="10" height="6" viewBox="0 0 10 6"><path d="M1 5 L5 1 L9 5" fill="none" stroke="#777" stroke-width="1"/></svg>
    <div class="sep" style="left:275px"></div><div class="sep" style="left:419px"></div><div class="sep" style="left:539px"></div><div class="sep" style="left:619px"></div>
    <div class="t" style="left:282px;top:6px;color:#4c607a"><i>修</i><i>改</i><i>日</i><i>期</i></div>
    <div class="t" style="left:426px;top:6px;color:#4c607a"><i>类</i><i>型</i></div>
    <div class="t" style="left:546px;top:6px;color:#4c607a"><i>大</i><i>小</i></div>
    <div class="row" style="top:31px"><svg class="fi" viewBox="0 0 48 48"><use href="#folder"/></svg><div class="rn">2024<i>年</i></div><div class="rd">2025/8/3 12:10</div><div class="rt"><i>文</i><i>件</i><i>夹</i></div></div>
<div class="row" style="top:59px"><svg class="fi" viewBox="0 0 48 48"><use href="#folder"/></svg><div class="rn">2025<i>年</i></div><div class="rd">2025/12/12 19:31</div><div class="rt"><i>文</i><i>件</i><i>夹</i></div></div>
<div class="row" style="top:87px"><svg class="fi" viewBox="0 0 48 48"><use href="#folder"/></svg><div class="rn">GEM<i>检</i><i>查</i>2025</div><div class="rd">2025/9/2 13:18</div><div class="rt"><i>文</i><i>件</i><i>夹</i></div></div>
<div class="row" style="top:115px"><svg class="fi" viewBox="0 0 48 48"><use href="#folder"/></svg><div class="rn">HB<i>调</i><i>查</i></div><div class="rd">2025/8/3 17:37</div><div class="rt"><i>文</i><i>件</i><i>夹</i></div></div>
<div class="row" style="top:143px"><svg class="fi" viewBox="0 0 48 48"><use href="#folder"/></svg><div class="rn">HR <i>相</i><i>关</i></div><div class="rd">2025/12/4 11:38</div><div class="rt"><i>文</i><i>件</i><i>夹</i></div></div>
<div class="row" style="top:171px"><svg class="fi" viewBox="0 0 48 48"><use href="#folder"/></svg><div class="rn">MEMO<i>备</i><i>忘</i><i>录</i></div><div class="rd">2025/12/12 11:42</div><div class="rt"><i>文</i><i>件</i><i>夹</i></div></div>
<div class="row" style="top:199px"><svg class="fi" viewBox="0 0 48 48"><use href="#folder"/></svg><div class="rn"><i>车</i><i>辆</i><i>相</i><i>关</i></div><div class="rd">2025/8/25 13:51</div><div class="rt"><i>文</i><i>件</i><i>夹</i></div></div>
<div class="row" style="top:227px"><svg class="fi" viewBox="0 0 48 48"><use href="#folder"/></svg><div class="rn"><i>酒</i><i>店</i><i>月</i><i>度</i><i>经</i><i>营</i><i>分</i><i>析</i><i>会</i></div><div class="rd">2025/12/4 11:35</div><div class="rt"><i>文</i><i>件</i><i>夹</i></div></div>
<div class="row" style="top:255px"><svg class="fi" viewBox="0 0 48 48"><use href="#folder"/></svg><div class="rn"><i>客</i><i>人</i><i>投</i><i>诉</i><i>申</i><i>诉</i></div><div class="rd">2025/9/12 11:18</div><div class="rt"><i>文</i><i>件</i><i>夹</i></div></div>
<div class="row" style="top:283px"><svg class="fi" viewBox="0 0 48 48"><use href="#folder"/></svg><div class="rn"><i>内</i><i>部</i><i>加</i><i>班</i></div><div class="rd">2025/8/21 15:04</div><div class="rt"><i>文</i><i>件</i><i>夹</i></div></div>
<div class="row" style="top:311px"><svg class="fi" viewBox="0 0 48 48"><use href="#folder"/></svg><div class="rn"><i>培</i><i>训</i><i>计</i><i>划</i></div><div class="rd">2025/3/30 9:21</div><div class="rt"><i>文</i><i>件</i><i>夹</i></div></div>
  </div>
  <div id="rtrack"><div class="abs" style="left:7px;top:17px;width:2px;height:194px;background:#858585;border-radius:1px"></div></div>
  <div id="foot">
    <div class="t" style="left:129px;top:15px;color:#000"><i>文</i><i>件</i><i>夹</i>:</div>
    <div class="abs" style="left:175px;top:12px;width:752px;height:25px;background:#fff;border:1px solid #e0e0e0;border-bottom:2px solid #0067c0;border-radius:3px 3px 0 0"></div>
    <div class="abs" style="left:179px;top:17px;width:1px;height:15px;background:#000"></div>
  </div>
  <div class="btn" style="left:724px;width:102px;border-color:#0067c0"><i>选</i><i>择</i><i>文</i><i>件</i><i>夹</i></div>
  <div class="btn" style="left:840px;width:86px"><i>取</i><i>消</i></div>
  <svg class="abs" style="left:933px;top:520px" width="9" height="9" viewBox="0 0 9 9"><g fill="#a0a0a0"><rect x="6" y="0" width="1.5" height="1.5"/><rect x="3" y="3" width="1.5" height="1.5"/><rect x="6" y="3" width="1.5" height="1.5"/><rect x="0" y="6" width="1.5" height="1.5"/><rect x="3" y="6" width="1.5" height="1.5"/><rect x="6" y="6" width="1.5" height="1.5"/></g></svg>
</div>

<!-- Taskbar -->
<div id="tb">
  <svg class="abs" style="left:18px;top:13px" width="26" height="17" viewBox="0 0 26 17">
   <linearGradient id="gCloud" x1="0" y1="0" x2="0" y2="1"><stop offset="0" stop-color="#b8c8f4"/><stop offset="1" stop-color="#dfe8fa"/></linearGradient>
   <path d="M4.5 15.5 C1.5 15.5 0.6 12.5 1 11 C1.5 9 3 8 5.3 8 C6 4 9 1 12.5 1 C15.5 1 17.5 3 18.5 4.8 C21 4.5 24.5 6.5 24.8 10 C25.5 13.5 24 15.5 22 15.5 Z" fill="url(#gCloud)" stroke="#7b98e6" stroke-width=".9"/>
   <path d="M5.3 8 C8 7.8 10 9.2 11 10.5 M18.5 4.8 C16.5 6 15.5 8 15.2 10" fill="none" stroke="#a6baf0" stroke-width=".7"/>
  </svg>
  <div class="t" style="left:50px;top:7px;font-size:11px;color:#222">12°C</div>
  <div class="t" style="left:50px;top:22px;font-size:11px;color:#444"><i>阴</i></div>
  <svg class="abs" style="left:661px;top:13px" width="23" height="23" viewBox="0 0 23 23"><rect x="0" y="0" width="11" height="11" rx="1" fill="url(#gWin)"/><rect x="12" y="0" width="11" height="11" rx="1" fill="url(#gWin)"/><rect x="0" y="12" width="11" height="11" rx="1" fill="url(#gWin)"/><rect x="12" y="12" width="11" height="11" rx="1" fill="url(#gWin)"/></svg>
  <div class="abs" style="left:698px;top:8px;width:218px;height:30px;border-radius:15px;background:#e9f6ef;border:1px solid #d2e6db"></div>
  <svg class="abs" style="left:708px;top:16px" width="16" height="17" viewBox="0 0 16 17"><circle cx="6.8" cy="6.8" r="5.3" fill="none" stroke="#222" stroke-width="1.6"/><path d="M10.6 10.6 L14.5 14.8" stroke="#222" stroke-width="1.8"/></svg>
  <div class="t" style="left:734px;top:16px;font-size:13px;color:#555"><i>搜</i><i>索</i></div>
  <svg class="abs" style="left:864px;top:13px" width="52" height="24" viewBox="0 0 52 24">
   <linearGradient id="gStraw" x1="0" y1="0" x2="1" y2="1"><stop offset="0" stop-color="#f8d8a0"/><stop offset="1" stop-color="#d9993f"/></linearGradient>
   <linearGradient id="gTop" x1="0" y1="0" x2="1" y2="0"><stop offset="0" stop-color="#5a4a98"/><stop offset=".35" stop-color="#8a7cc0"/><stop offset="1" stop-color="#3a2c6a"/></linearGradient>
   <ellipse cx="11.5" cy="10.5" rx="9.5" ry="6.5" transform="rotate(-38 11.5 10.5)" fill="url(#gStraw)"/>
   <ellipse cx="17.8" cy="6.2" rx="3.2" ry="5.4" transform="rotate(35 17.8 6.2)" fill="#d49446"/>
   <path d="M6 15 L13.5 2.5" stroke="#e0506a" stroke-width="2.2"/>
   <circle cx="3.8" cy="13" r="2.6" fill="#f07a90"/><circle cx="3.2" cy="14.6" r=".9" fill="#e02030"/>
   <path d="M11 12 C13 16 15 19 17.5 20.5 M5 15.5 C8 18 12 20 17.5 20.5" fill="none" stroke="#ea6a84" stroke-width="1.1"/>
   <path d="M15.5 18.5 L20 22.5 M19.5 18.5 L16 22.5" stroke="#e0506a" stroke-width="1.6"/>
   <path d="M29.3 3 C29.5 1.5 43 1.5 43.2 3 L43.2 13.5 H29.3 Z" fill="url(#gTop)"/>
   <path d="M29.3 12 H43.2 V16 C39 17 33 17 29.3 16 Z" fill="#c2b2f0"/>
   <path d="M24.5 12.3 C25.5 18.5 33 20.5 38 20.3 C43 20.3 47.2 17.5 48 13 C46 14.8 41 15.5 36.5 15.5 C31 15.5 27 14.5 24.5 12.3 Z" fill="#4a3a82"/>
  </svg>
  <svg class="abs" style="left:929px;top:13px" width="24" height="22" viewBox="0 0 24 22"><rect x="6" y="0" width="18" height="15" fill="#f4f4f4" stroke="#e0e0e0" stroke-width=".5"/><rect x="0" y="6" width="18" height="16" fill="#1f1f1f"/><rect x="6" y="6" width="12" height="9" fill="#bdbdbd"/></svg>
  <svg class="tbi" style="left:973px" viewBox="0 0 48 48"><use href="#folder"/><rect x="12" y="27" width="24" height="10" rx="2" fill="#1a73c8"/></svg>
  <svg class="tbi" style="left:1017px" viewBox="0 0 48 48"><use href="#edge"/></svg>
  <svg class="abs" style="left:1061px;top:13px" width="24" height="24" viewBox="0 0 24 24"><path d="M8 6 V3 C8 1.5 9 1 10 1 H14 C15 1 16 1.5 16 3 V6" fill="none" stroke="#2b8fe0" stroke-width="1.6"/><rect x="0.5" y="5" width="23" height="18" rx="3" fill="#10437e"/><rect x="7" y="9" width="4.5" height="4.5" fill="#f35325"/><rect x="12.5" y="9" width="4.5" height="4.5" fill="#81bc06"/><rect x="7" y="14.5" width="4.5" height="4.5" fill="#05a6f0"/><rect x="12.5" y="14.5" width="4.5" height="4.5" fill="#ffba08"/></svg>
  <svg class="abs" style="left:1108px;top:12px" width="18" height="24" viewBox="0 0 18 24"><rect x="0" y="0" width="18" height="24" rx="1.5" fill="#6d6d6d"/><rect x="2" y="2" width="14" height="4" fill="#5bcbf0"/><g fill="#e9e9e9"><rect x="2" y="8" width="4" height="3"/><rect x="7" y="8" width="4" height="3"/><rect x="12" y="8" width="4" height="3"/><rect x="2" y="13" width="4" height="3"/><rect x="7" y="13" width="4" height="3"/><rect x="2" y="18" width="4" height="3"/><rect x="7" y="18" width="4" height="3"/></g><rect x="12" y="13" width="4" height="8" fill="#1b3f7a"/></svg>
  <div class="abs" style="left:1142px;top:5px;width:38px;height:38px;border-radius:4px;background:#e4f4ec;border:1px solid #d6e9df"></div>
  <svg class="abs" style="left:1149px;top:13px" width="24" height="20" viewBox="0 0 24 20"><use href="#wechat"/></svg>
  <div class="abs" style="left:1153px;top:40px;width:16px;height:3px;border-radius:2px;background:#0f6cd6"></div>
  <svg class="tbi" style="left:1193px" viewBox="0 0 48 48"><use href="#chromelogo"/></svg>
  <svg class="tbi" style="left:1237px" viewBox="0 0 48 48"><use href="#kunlun"/></svg>
  <div class="dot" style="left:982px"></div><div class="dot" style="left:1026px"></div><div class="dot" style="left:1114px"></div><div class="dot" style="left:1202px"></div><div class="dot" style="left:1246px"></div>
  <svg class="abs" style="left:1644px;top:19px" width="14" height="9" viewBox="0 0 14 9"><path d="M1.5 7.5 L7 2 L12.5 7.5" fill="none" stroke="#222" stroke-width="1.4"/></svg>
  <svg class="abs" style="left:1674px;top:14px" width="20" height="20" viewBox="0 0 20 20"><path d="M3 9 A7 7 0 0 1 16 5 M16 1.5 V5.5 H12 M17 11 A7 7 0 0 1 4 15 M4 18.5 V14.5 H8" fill="none" stroke="#222" stroke-width="1.3"/><circle cx="12.8" cy="14" r="3.6" fill="#1570d8"/></svg>
  <div class="t" style="left:1707px;top:14px;font-size:15px;color:#111"><i>中</i></div>
  <div class="t" style="left:1745px;top:14px;font-size:15px;color:#111"><i>拼</i></div>
  <svg class="abs" style="left:1781px;top:14px" width="18" height="18" viewBox="0 0 18 18"><path d="M11 2 H1.5 V12 H11 M4 16.5 H11 M7 12 V16.5" fill="none" stroke="#222" stroke-width="1.2"/><rect x="12" y="1.5" width="4" height="5" rx="1.5" fill="none" stroke="#222" stroke-width="1.1"/><path d="M14 6.5 V16.5" stroke="#222" stroke-width="1.2"/></svg>
  <svg class="abs" style="left:1806px;top:15px" width="18" height="16" viewBox="0 0 18 16"><path d="M1 5.5 H4 L8 2 V14 L4 10.5 H1 Z" fill="none" stroke="#222" stroke-width="1.1"/><path d="M10.5 5.5 C11.5 7 11.5 9 10.5 10.5 M12.5 3.5 C14.5 6 14.5 10 12.5 12.5 M14.5 1.5 C17.5 5 17.5 11 14.5 14.5" fill="none" stroke="#222" stroke-width="1.1"/></svg>
  <div class="t" style="left:1840px;top:8px;width:61px;text-align:right;font-size:12px;color:#111">13:21</div>
  <div class="t" style="left:1830px;top:24px;width:71px;text-align:right;font-size:12px;color:#111">2025/12/16</div>
</div>
</body></html>
